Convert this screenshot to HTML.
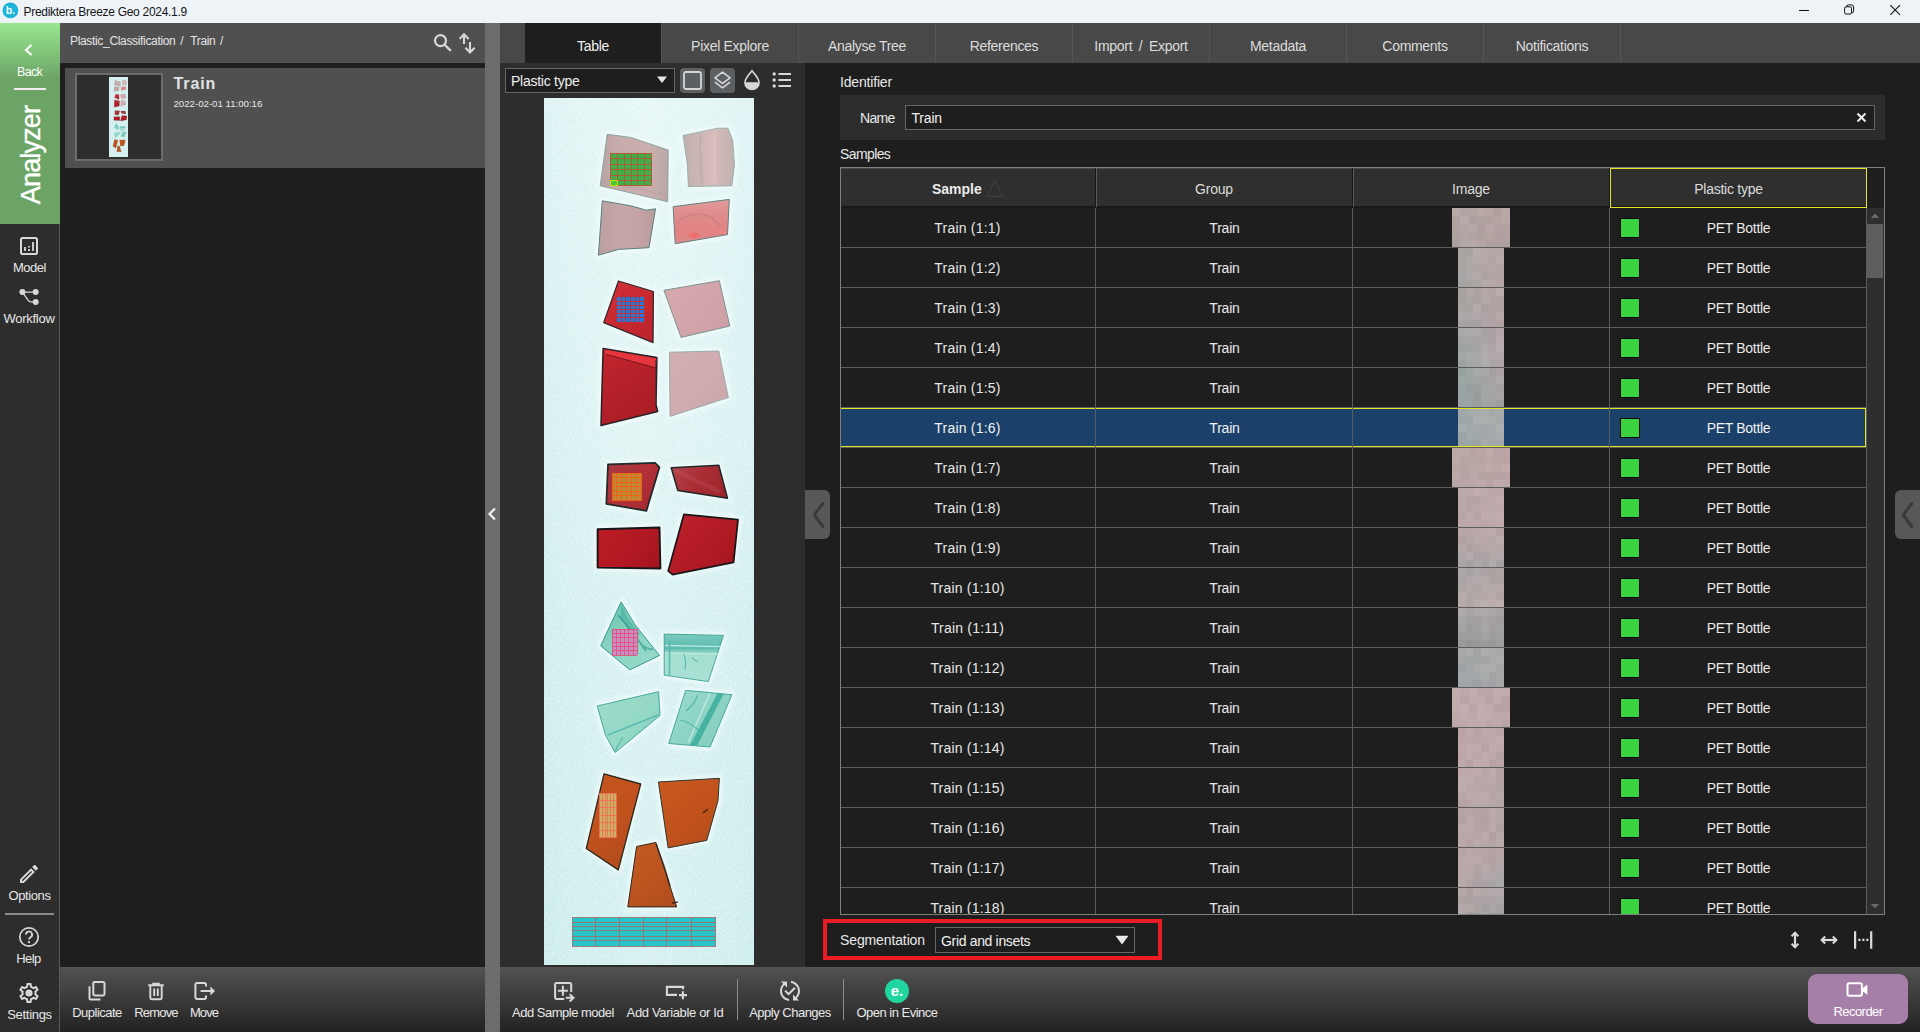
<!DOCTYPE html><html><head><meta charset="utf-8"><title>Prediktera Breeze Geo 2024.1.9</title><style>html,body{margin:0;padding:0;}body{width:1920px;height:1032px;position:relative;overflow:hidden;background:#1e1e1e;font-family:"Liberation Sans",sans-serif;}div{box-sizing:border-box;}</style></head><body>
<div style="position:absolute;left:0px;top:0px;width:1920px;height:23px;background:#eef3f8;"></div>
<svg style="position:absolute;left:1.5px;top:2.4px;" width="17" height="17" viewBox="0 0 17 17"><circle cx="8.4" cy="8.4" r="7.9" fill="#1cb4d8"/><text x="8.3" y="12.3" font-size="10.5" font-weight="bold" fill="#fff" text-anchor="middle" font-family="Liberation Sans, sans-serif">b.</text></svg>
<div style="position:absolute;left:23.5px;top:1px;width:300px;height:23px;line-height:23px;font-size:12px;color:#161616;text-align:left;letter-spacing:-0.29px;font-weight:normal;white-space:nowrap;">Prediktera Breeze Geo 2024.1.9</div>
<svg style="position:absolute;left:1790px;top:0px;" width="130" height="23" viewBox="0 0 130 23"><path d="M9 10.5h10" stroke="#111" stroke-width="1" fill="none"/><rect x="54.600" y="6.800" width="6.900" height="7.200" rx="1.4" fill="none" stroke="#111" stroke-width="1"/><path d="M56.600 6.800v-.3a1.600 1.600 0 0 1 1.600-1.600h3.300a2.100 2.100 0 0 1 2.100 2.100v4.200a1.600 1.600 0 0 1-1.600 1.600h-.5" fill="none" stroke="#111" stroke-width="1"/><path d="M100.300 5.200l9.700 9.700M110 5.200l-9.700 9.700" stroke="#111" stroke-width="1.1" fill="none"/></svg>
<div style="position:absolute;left:0px;top:23px;width:60px;height:1009px;background:#2d2d2d;border-right:1px solid #5a5a5a;box-sizing:border-box;"></div>
<div style="position:absolute;left:0px;top:23px;width:60px;height:201px;background:linear-gradient(#99e68f 0px,#6ca466 56px,#6ca466 201px);"></div>
<svg style="position:absolute;left:19px;top:42px;" width="20" height="16" viewBox="0 0 20 16"><path d="M12.5 3L7 8l5.5 5" fill="none" stroke="#fff" stroke-width="2"/></svg>
<div style="position:absolute;left:0px;top:63px;width:59px;height:18px;line-height:18px;font-size:12.5px;color:#fff;text-align:center;letter-spacing:-0.7px;font-weight:normal;white-space:nowrap;">Back</div>
<div style="position:absolute;left:14px;top:88px;width:32px;height:2px;background:#f4ecf4;"></div>
<div style="position:absolute;left:0;top:100px;width:60px;height:110px;"><div style="position:absolute;left:30.5px;top:54.5px;transform:translate(-50%,-50%) rotate(-90deg);font-size:27px;color:#fff;white-space:nowrap;letter-spacing:-0.85px;-webkit-text-stroke:0.35px #fff;">Analyzer</div></div>
<svg style="position:absolute;left:20px;top:237px;" width="18" height="18" viewBox="0 0 18 18"><rect x="1" y="1" width="16" height="16" rx="1.5" fill="none" stroke="#d8d8d8" stroke-width="2"/><path d="M5 10v4M9 9v1.4M9 12v2M13 5v9" stroke="#d8d8d8" stroke-width="1.8" fill="none"/></svg>
<div style="position:absolute;left:0px;top:259px;width:59px;height:18px;line-height:18px;font-size:13px;color:#e8e8e8;text-align:center;letter-spacing:-0.5px;font-weight:normal;white-space:nowrap;">Model</div>
<svg style="position:absolute;left:18px;top:287px;" width="22" height="20" viewBox="0 0 22 20"><path d="M4.4 5.1h13.3M4.4 5.1l6 8.6q.8 1.2 2.2 1.2h5" stroke="#d8d8d8" stroke-width="1.3" fill="none"/><circle cx="4.4" cy="5.1" r="3" fill="#d8d8d8"/><circle cx="17.7" cy="5.1" r="3" fill="#d8d8d8"/><circle cx="17.7" cy="15" r="3" fill="#d8d8d8"/></svg>
<div style="position:absolute;left:-1px;top:310px;width:60px;height:18px;line-height:18px;font-size:13px;color:#e8e8e8;text-align:center;letter-spacing:-0.25px;font-weight:normal;white-space:nowrap;">Workflow</div>
<svg style="position:absolute;left:17px;top:862px;" width="24" height="24" viewBox="0 0 24 24"><path d="M14.06 9.02l.92.92L5.92 19H5v-.92l9.060-9.060M17.660 3c-.25 0-.51.1-.7.29l-1.830 1.830 3.750 3.750 1.830-1.830c.39-.39.39-1.020 0-1.410l-2.340-2.340c-.2-.2-.45-.29-.71-.29zm-3.600 3.190L3 17.250V21h3.750L17.810 9.940l-3.750-3.750z" fill="#d8d8d8"/></svg>
<div style="position:absolute;left:0px;top:887px;width:59px;height:18px;line-height:18px;font-size:13px;color:#e8e8e8;text-align:center;letter-spacing:-0.4px;font-weight:normal;white-space:nowrap;">Options</div>
<div style="position:absolute;left:5px;top:913px;width:49px;height:2px;background:#8a8a8a;"></div>
<svg style="position:absolute;left:18px;top:926px;" width="22" height="22" viewBox="0 0 22 22"><circle cx="11" cy="11" r="9.2" fill="none" stroke="#d8d8d8" stroke-width="1.7"/><path d="M7.9 8.6a3.1 3.1 0 1 1 4.6 2.7c-1 .6-1.5 1.1-1.5 2.3" fill="none" stroke="#d8d8d8" stroke-width="1.8"/><circle cx="11" cy="16.2" r="1.15" fill="#d8d8d8"/></svg>
<div style="position:absolute;left:-1px;top:950px;width:59px;height:18px;line-height:18px;font-size:13px;color:#e8e8e8;text-align:center;letter-spacing:-0.55px;font-weight:normal;white-space:nowrap;">Help</div>
<svg style="position:absolute;left:16.8px;top:980.8px;" width="24" height="24" viewBox="0 0 24 24"><path d="M19.43 12.98c.04-.32.07-.64.07-.98 0-.34-.03-.66-.07-.98l2.11-1.65c.19-.15.24-.42.12-.64l-2-3.46c-.09-.16-.26-.25-.44-.25-.06 0-.12.01-.17.03l-2.49 1c-.52-.4-1.08-.73-1.69-.98l-.38-2.65C14.46 2.18 14.25 2 14 2h-4c-.25 0-.46.18-.49.42l-.38 2.65c-.61.25-1.17.59-1.69.98l-2.49-1c-.06-.02-.12-.03-.18-.03-.17 0-.34.09-.43.25l-2 3.46c-.13.22-.07.49.12.64l2.11 1.650c-.04.32-.07.65-.07.98 0 .33.03.66.07.98l-2.11 1.650c-.19.15-.24.42-.12.64l2 3.460c.09.16.26.25.44.25.06 0 .12-.01.17-.03l2.490-1c.52.4 1.080.73 1.690.98l.38 2.650c.03.24.24.42.49.42h4c.25 0 .46-.18.49-.42l.38-2.650c.61-.25 1.170-.59 1.690-.98l2.490 1c.06.02.12.03.18.03.17 0 .34-.09.43-.25l2-3.460c.12-.22.07-.49-.12-.64l-2.110-1.650zm-1.980-1.710c.04.31.05.52.05.73 0 .21-.02.43-.05.73l-.14 1.130.89.7 1.080.84-.7 1.210-1.270-.51-1.040-.42-.9.68c-.43.32-.84.56-1.250.73l-1.060.43-.16 1.130-.2 1.350h-1.400l-.19-1.350-.16-1.130-1.060-.43c-.43-.18-.83-.41-1.230-.71l-.91-.7-1.060.43-1.270.51-.7-1.210 1.080-.84.89-.7-.14-1.130c-.03-.31-.05-.54-.05-.74s.02-.43.05-.73l.14-1.130-.89-.7-1.080-.84.7-1.210 1.270.51 1.040.42.9-.68c.43-.32.84-.56 1.250-.73l1.060-.43.16-1.130.2-1.350h1.390l.19 1.350.16 1.130 1.060.43c.43.18.83.41 1.230.71l.91.7 1.060-.43 1.270-.51.7 1.210-1.070.85-.89.7.14 1.130z" fill="#d8d8d8"/><circle cx="12" cy="12" r="3.6" fill="#d8d8d8"/></svg>
<div style="position:absolute;left:0px;top:1006px;width:59px;height:18px;line-height:18px;font-size:13px;color:#e8e8e8;text-align:center;letter-spacing:-0.3px;font-weight:normal;white-space:nowrap;">Settings</div>
<div style="position:absolute;left:60px;top:23px;width:425px;height:40px;background:#505050;"></div>
<div style="position:absolute;left:70px;top:22.5px;width:120px;height:36px;line-height:36px;font-size:12px;color:#e4e4e4;text-align:left;letter-spacing:-0.33px;font-weight:normal;white-space:nowrap;">Plastic_Classification</div>
<div style="position:absolute;left:180.3px;top:22.5px;width:10px;height:36px;line-height:36px;font-size:12px;color:#e4e4e4;text-align:left;letter-spacing:0px;font-weight:normal;white-space:nowrap;">/</div>
<div style="position:absolute;left:190.3px;top:22.5px;width:40px;height:36px;line-height:36px;font-size:12px;color:#e4e4e4;text-align:left;letter-spacing:-0.35px;font-weight:normal;white-space:nowrap;">Train</div>
<div style="position:absolute;left:220px;top:22.5px;width:10px;height:36px;line-height:36px;font-size:12px;color:#e4e4e4;text-align:left;letter-spacing:0px;font-weight:normal;white-space:nowrap;">/</div>
<svg style="position:absolute;left:431px;top:32px;" width="24" height="24" viewBox="0 0 24 24"><circle cx="9.5" cy="8.6" r="5.5" fill="none" stroke="#d8d8d8" stroke-width="2.2"/><path d="M13.500 12.600l6.400 6.200" stroke="#d8d8d8" stroke-width="2.3"/></svg>
<svg style="position:absolute;left:457px;top:32px;" width="24" height="24" viewBox="0 0 24 24"><path d="M7 12.100V2.400M2.600 6.900L7 2.200l4.600 4.700M13 10v10.400M8.500 15.700l4.500 4.800 4.600-4.800" fill="none" stroke="#d8d8d8" stroke-width="2.1"/></svg>
<div style="position:absolute;left:60px;top:63px;width:425px;height:904px;background:#1e1e1e;"></div>
<div style="position:absolute;left:65px;top:68px;width:420px;height:100px;background:#505050;"></div>
<div style="position:absolute;left:75px;top:73px;width:88px;height:88px;background:#2d2d2d;border:2px solid #6c6c6c;box-sizing:border-box;"></div>
<svg style="position:absolute;left:108.8px;top:77px" width="19.4" height="80" viewBox="0 0 210 867"><rect width="210" height="867" fill="#d6f0f0"/><use href="#pcs"/></svg>
<div style="position:absolute;left:173.5px;top:72.5px;width:200px;height:22px;line-height:22px;font-size:16px;color:#e2e2e2;text-align:left;letter-spacing:0.9px;font-weight:bold;white-space:nowrap;">Train</div>
<div style="position:absolute;left:173.5px;top:96.5px;width:200px;height:14px;line-height:14px;font-size:9.7px;color:#e6e6e6;text-align:left;letter-spacing:-0.02px;font-weight:normal;white-space:nowrap;">2022-02-01 11:00:16</div>
<div style="position:absolute;left:60px;top:967px;width:425px;height:65px;background:linear-gradient(#525252,#3b3b3b 48%,#222222);"></div>
<svg style="position:absolute;left:87px;top:981px;" width="20" height="20" viewBox="0 0 20 20"><rect x="6.3" y="1.1" width="11.2" height="13.4" rx="1.4" fill="none" stroke="#d8d8d8" stroke-width="2"/><path d="M2.5 5.2v12a1.2 1.2 0 0 0 1.2 1.2h9.8" fill="none" stroke="#d8d8d8" stroke-width="2"/></svg>
<div style="position:absolute;left:57px;top:1004px;width:80px;height:18px;line-height:18px;font-size:13px;color:#e8e8e8;text-align:center;letter-spacing:-0.5px;font-weight:normal;white-space:nowrap;">Duplicate</div>
<svg style="position:absolute;left:146px;top:981px;" width="20" height="20" viewBox="0 0 20 20"><path d="M2.2 4.2h15.6M7.2 3.6V2.6h5.6v1M4.3 4.8v12a1.4 1.4 0 0 0 1.4 1.4h8.6a1.4 1.4 0 0 0 1.4-1.4V4.8M8.2 7.6v7.4M11.8 7.6v7.4" fill="none" stroke="#d8d8d8" stroke-width="1.9"/></svg>
<div style="position:absolute;left:116px;top:1004px;width:80px;height:18px;line-height:18px;font-size:13px;color:#e8e8e8;text-align:center;letter-spacing:-0.8px;font-weight:normal;white-space:nowrap;">Remove</div>
<svg style="position:absolute;left:193px;top:981px;" width="24" height="20" viewBox="0 0 24 20"><path d="M13 5.6V3.4a1.4 1.4 0 0 0-1.4-1.4H3.8a1.4 1.4 0 0 0-1.4 1.4v13.2a1.4 1.4 0 0 0 1.4 1.4h7.800a1.4 1.4 0 0 0 1.4-1.400v-2.200M7.600 10h11" fill="none" stroke="#d8d8d8" stroke-width="2"/><path d="M17.400 5.600l4.600 4.400-4.600 4.400z" fill="#d8d8d8"/></svg>
<div style="position:absolute;left:164px;top:1004px;width:80px;height:18px;line-height:18px;font-size:13px;color:#e8e8e8;text-align:center;letter-spacing:-0.9px;font-weight:normal;white-space:nowrap;">Move</div>
<div style="position:absolute;left:485px;top:23px;width:15px;height:1009px;background:#6c6c6c;"></div>
<svg style="position:absolute;left:486px;top:506px;" width="13" height="16" viewBox="0 0 13 16"><path d="M9 2.5L3.5 8 9 13.5" fill="none" stroke="#f2f2f2" stroke-width="2.2"/></svg>
<div style="position:absolute;left:500px;top:23px;width:1420px;height:40px;background:#484848;"></div>
<div style="position:absolute;left:525px;top:23px;width:136px;height:40px;background:#1e1e1e;"></div>
<div style="position:absolute;left:525px;top:27px;width:136px;height:38px;line-height:38px;font-size:14px;color:#f0f0f0;text-align:center;letter-spacing:-0.3px;font-weight:normal;white-space:nowrap;">Table</div>
<div style="position:absolute;left:662px;top:27px;width:136px;height:38px;line-height:38px;font-size:14px;color:#dcdcdc;text-align:center;letter-spacing:-0.3px;font-weight:normal;white-space:nowrap;">Pixel Explore</div>
<div style="position:absolute;left:661px;top:23px;width:1px;height:40px;background:#555;"></div>
<div style="position:absolute;left:799px;top:27px;width:136px;height:38px;line-height:38px;font-size:14px;color:#dcdcdc;text-align:center;letter-spacing:-0.3px;font-weight:normal;white-space:nowrap;">Analyse Tree</div>
<div style="position:absolute;left:798px;top:23px;width:1px;height:40px;background:#555;"></div>
<div style="position:absolute;left:936px;top:27px;width:136px;height:38px;line-height:38px;font-size:14px;color:#dcdcdc;text-align:center;letter-spacing:-0.3px;font-weight:normal;white-space:nowrap;">References</div>
<div style="position:absolute;left:935px;top:23px;width:1px;height:40px;background:#555;"></div>
<div style="position:absolute;left:1073px;top:27px;width:136px;height:38px;line-height:38px;font-size:14px;color:#dcdcdc;text-align:center;letter-spacing:-0.3px;font-weight:normal;white-space:nowrap;word-spacing:3px;">Import / Export</div>
<div style="position:absolute;left:1072px;top:23px;width:1px;height:40px;background:#555;"></div>
<div style="position:absolute;left:1210px;top:27px;width:136px;height:38px;line-height:38px;font-size:14px;color:#dcdcdc;text-align:center;letter-spacing:-0.3px;font-weight:normal;white-space:nowrap;">Metadata</div>
<div style="position:absolute;left:1209px;top:23px;width:1px;height:40px;background:#555;"></div>
<div style="position:absolute;left:1347px;top:27px;width:136px;height:38px;line-height:38px;font-size:14px;color:#dcdcdc;text-align:center;letter-spacing:-0.3px;font-weight:normal;white-space:nowrap;">Comments</div>
<div style="position:absolute;left:1346px;top:23px;width:1px;height:40px;background:#555;"></div>
<div style="position:absolute;left:1484px;top:27px;width:136px;height:38px;line-height:38px;font-size:14px;color:#dcdcdc;text-align:center;letter-spacing:-0.3px;font-weight:normal;white-space:nowrap;">Notifications</div>
<div style="position:absolute;left:1483px;top:23px;width:1px;height:40px;background:#555;"></div>
<div style="position:absolute;left:1620px;top:23px;width:1px;height:40px;background:#555;"></div>
<div style="position:absolute;left:500px;top:63px;width:305px;height:904px;background:#2d2d2d;"></div>
<div style="position:absolute;left:505px;top:68px;width:170px;height:25px;background:#1e1e1e;border:1px solid #666;box-sizing:border-box;"></div>
<div style="position:absolute;left:511px;top:69px;width:120px;height:25px;line-height:25px;font-size:14px;color:#f0f0f0;text-align:left;letter-spacing:-0.25px;font-weight:normal;white-space:nowrap;">Plastic type</div>
<svg style="position:absolute;left:657px;top:76px;" width="10" height="8" viewBox="0 0 10 8"><path d="M0 0.5h10L5 7z" fill="#e8e8e8"/></svg>
<div style="position:absolute;left:680px;top:68px;width:25px;height:25px;background:#5d6063;border-radius:4px;"></div>
<svg style="position:absolute;left:683px;top:71px;" width="19" height="19" viewBox="0 0 19 19"><rect x="1" y="1" width="17" height="17" rx="2" fill="none" stroke="#d6d6d6" stroke-width="1.8"/></svg>
<div style="position:absolute;left:710px;top:68px;width:25px;height:25px;background:#5d6063;border-radius:4px;"></div>
<svg style="position:absolute;left:712px;top:70px;" width="21" height="21" viewBox="0 0 21 21"><path d="M10.5 2.2l7.6 5.6-7.6 5.6-7.6-5.6z" fill="none" stroke="#d6d6d6" stroke-width="1.6" stroke-linejoin="round"/><path d="M2.9 12.2l7.6 5.6 7.6-5.6" fill="none" stroke="#d6d6d6" stroke-width="1.6" stroke-linejoin="round"/></svg>
<svg style="position:absolute;left:742px;top:69px;" width="20" height="22" viewBox="0 0 20 22"><path d="M10 1.8C7.4 5.2 3 9.4 3 13.4a7 7 0 0 0 14 0C17 9.4 12.6 5.2 10 1.8z" fill="none" stroke="#d6d6d6" stroke-width="1.7"/><path d="M3 13.2h14q.2 1.200-.2 2.200a7 7 0 0 1-13.600 0q-.4-1-.2-2.200z" fill="#d6d6d6"/></svg>
<svg style="position:absolute;left:772px;top:71px;" width="20" height="18" viewBox="0 0 20 18"><circle cx="2.2" cy="3" r="1.7" fill="#d6d6d6"/><circle cx="2.2" cy="9" r="1.7" fill="#d6d6d6"/><circle cx="2.2" cy="15" r="1.7" fill="#d6d6d6"/><path d="M6.4 3h12.6M6.4 9h12.6M6.4 15h12.6" stroke="#d6d6d6" stroke-width="1.9"/></svg>
<svg style="position:absolute;left:544px;top:98px;" width="210" height="867" viewBox="0 0 210 867"><defs><filter id="nz" x="0" y="0" width="100%" height="100%"><feTurbulence type="fractalNoise" baseFrequency="0.55 0.35" numOctaves="2" seed="3" result="t"/><feColorMatrix in="t" type="matrix" values="0 0 0 0 1  0 0 0 0 1  0 0 0 0 1  1.6 0 0 0 -0.62"/></filter><filter id="nz2" x="0" y="0" width="100%" height="100%"><feTurbulence type="fractalNoise" baseFrequency="0.7 0.25" numOctaves="2" seed="11" result="t"/><feColorMatrix in="t" type="matrix" values="0 0 0 0 0.62  0 0 0 0 0.86  0 0 0 0 0.88  0 1.5 0 0 -0.66"/></filter><filter id="hb" x="-20%" y="-20%" width="140%" height="140%"><feGaussianBlur stdDeviation="2.2"/></filter><filter id="sb" x="-10%" y="-10%" width="120%" height="120%"><feGaussianBlur stdDeviation="1.1"/></filter><linearGradient id="bg" gradientUnits="userSpaceOnUse" x1="0" y1="0" x2="0" y2="867"><stop offset="0" stop-color="#e2f5f5"/><stop offset="0.4" stop-color="#dbf2f2"/><stop offset="0.62" stop-color="#d2efef"/><stop offset="1" stop-color="#cdeded"/></linearGradient><linearGradient id="bgx" gradientUnits="userSpaceOnUse" x1="0" y1="0" x2="210" y2="0"><stop offset="0" stop-color="#b8e2e6"/><stop offset="0.12" stop-color="#d8f0f0"/><stop offset="0.5" stop-color="#ffffff"/><stop offset="0.9" stop-color="#d8f0f0"/><stop offset="1" stop-color="#c4e8ea"/></linearGradient><linearGradient id="p1" gradientUnits="userSpaceOnUse" x1="56" y1="0" x2="124" y2="0"><stop offset="0" stop-color="#b9a3a3"/><stop offset="0.25" stop-color="#c7abab"/><stop offset="0.7" stop-color="#cbb0af"/><stop offset="1" stop-color="#bca7a6"/></linearGradient><linearGradient id="p2" gradientUnits="userSpaceOnUse" x1="139" y1="0" x2="191" y2="0"><stop offset="0" stop-color="#c0b0ae"/><stop offset="0.3" stop-color="#cdb6b5"/><stop offset="0.55" stop-color="#d7bcbc"/><stop offset="0.8" stop-color="#cbb6b4"/><stop offset="1" stop-color="#bfb2af"/></linearGradient><linearGradient id="p3" gradientUnits="userSpaceOnUse" x1="54" y1="0" x2="112" y2="0"><stop offset="0" stop-color="#bb9fa0"/><stop offset="0.4" stop-color="#c7a6a7"/><stop offset="0.7" stop-color="#c4a3a4"/><stop offset="1" stop-color="#b99c9d"/></linearGradient><linearGradient id="p4" gradientUnits="userSpaceOnUse" x1="0" y1="101" x2="0" y2="146"><stop offset="0" stop-color="#e39c9c"/><stop offset="0.35" stop-color="#dd8c8c"/><stop offset="0.7" stop-color="#e58282"/><stop offset="1" stop-color="#d98a8a"/></linearGradient><linearGradient id="p5" gradientUnits="userSpaceOnUse" x1="60" y1="183" x2="110" y2="245"><stop offset="0" stop-color="#d23038"/><stop offset="0.5" stop-color="#c8282f"/><stop offset="1" stop-color="#b8242c"/></linearGradient><linearGradient id="p6" gradientUnits="userSpaceOnUse" x1="120" y1="183" x2="186" y2="240"><stop offset="0" stop-color="#d5a9ad"/><stop offset="0.5" stop-color="#d3a5aa"/><stop offset="1" stop-color="#c99ea4"/></linearGradient><linearGradient id="p7" gradientUnits="userSpaceOnUse" x1="57" y1="250" x2="113" y2="328"><stop offset="0" stop-color="#c4262e"/><stop offset="0.4" stop-color="#b6212a"/><stop offset="1" stop-color="#a81d26"/></linearGradient><linearGradient id="p8" gradientUnits="userSpaceOnUse" x1="125" y1="253" x2="185" y2="318"><stop offset="0" stop-color="#d0b0b3"/><stop offset="0.5" stop-color="#d1abb0"/><stop offset="1" stop-color="#c8a6aa"/></linearGradient><linearGradient id="p9" gradientUnits="userSpaceOnUse" x1="62" y1="365" x2="116" y2="413"><stop offset="0" stop-color="#a83a42"/><stop offset="0.5" stop-color="#b23038"/><stop offset="1" stop-color="#a02830"/></linearGradient><linearGradient id="p10" gradientUnits="userSpaceOnUse" x1="127" y1="367" x2="184" y2="400"><stop offset="0" stop-color="#b4434a"/><stop offset="0.5" stop-color="#a82c34"/><stop offset="1" stop-color="#9c242c"/></linearGradient><linearGradient id="p11" gradientUnits="userSpaceOnUse" x1="53" y1="430" x2="116" y2="470"><stop offset="0" stop-color="#ba1c25"/><stop offset="0.5" stop-color="#b31922"/><stop offset="1" stop-color="#a4151e"/></linearGradient><linearGradient id="p12" gradientUnits="userSpaceOnUse" x1="124" y1="416" x2="194" y2="477"><stop offset="0" stop-color="#bd222b"/><stop offset="0.5" stop-color="#b31b24"/><stop offset="1" stop-color="#a3161f"/></linearGradient><linearGradient id="p13" gradientUnits="userSpaceOnUse" x1="56" y1="504" x2="116" y2="572"><stop offset="0" stop-color="#5fbfae"/><stop offset="0.4" stop-color="#86d0be"/><stop offset="1" stop-color="#9adccc"/></linearGradient><linearGradient id="p14" gradientUnits="userSpaceOnUse" x1="0" y1="536" x2="0" y2="584"><stop offset="0" stop-color="#7ccdbd"/><stop offset="0.12" stop-color="#6cc4b6"/><stop offset="0.3" stop-color="#5fbcb0"/><stop offset="0.42" stop-color="#a4dfd0"/><stop offset="1" stop-color="#a9e0d3"/></linearGradient><linearGradient id="p15" gradientUnits="userSpaceOnUse" x1="53" y1="594" x2="116" y2="655"><stop offset="0" stop-color="#9cdccb"/><stop offset="0.6" stop-color="#93d8c5"/><stop offset="1" stop-color="#6cc4b2"/></linearGradient><linearGradient id="p16" gradientUnits="userSpaceOnUse" x1="125" y1="592" x2="188" y2="649"><stop offset="0" stop-color="#9adccc"/><stop offset="0.5" stop-color="#8dd3c3"/><stop offset="1" stop-color="#84cdbd"/></linearGradient><linearGradient id="p17" gradientUnits="userSpaceOnUse" x1="42" y1="676" x2="97" y2="772"><stop offset="0" stop-color="#c6561f"/><stop offset="0.5" stop-color="#bf511d"/><stop offset="1" stop-color="#b14a1c"/></linearGradient><linearGradient id="p18" gradientUnits="userSpaceOnUse" x1="114" y1="680" x2="176" y2="750"><stop offset="0" stop-color="#c85a20"/><stop offset="0.5" stop-color="#c2521c"/><stop offset="1" stop-color="#b34c1c"/></linearGradient><linearGradient id="p19" gradientUnits="userSpaceOnUse" x1="84" y1="744" x2="133" y2="809"><stop offset="0" stop-color="#c45a22"/><stop offset="0.5" stop-color="#bd5520"/><stop offset="1" stop-color="#b04c1e"/></linearGradient></defs><rect width="210" height="867" fill="url(#bg)"/><rect width="210" height="867" fill="url(#bgx)" opacity="0.16"/><rect width="210" height="867" filter="url(#nz)" opacity="0.55"/><rect width="210" height="867" filter="url(#nz2)" opacity="0.35"/><g filter="url(#hb)" opacity="0.9"><polygon points="63.2,36.3 86.7,39.4 124.2,52.0 123.7,103.8 93.7,96.5 56.2,87.8" fill="#f4fcfc" stroke="#f4fcfc" stroke-width="6" stroke-linejoin="round" /><polygon points="139.0,37.5 173.9,30.2 184.0,30.2 188.8,42.4 190.5,66.8 187.9,87.8 144.3,88.6 143.4,66.8" fill="#f4fcfc" stroke="#f4fcfc" stroke-width="6" stroke-linejoin="round" /><polygon points="58.3,102.8 86.7,107.8 102.4,112.2 111.5,110.8 105.0,149.7 74.5,151.4 54.4,157.2" fill="#f4fcfc" stroke="#f4fcfc" stroke-width="6" stroke-linejoin="round" /><polygon points="129.1,108.7 185.3,101.4 183.5,136.6 131.2,145.7" fill="#f4fcfc" stroke="#f4fcfc" stroke-width="6" stroke-linejoin="round" /><polygon points="74.5,183.0 109.4,193.5 109.0,244.6 59.7,224.6" fill="#f4fcfc" stroke="#f4fcfc" stroke-width="6" stroke-linejoin="round" /><polygon points="119.9,192.3 175.3,182.7 185.8,228.1 137.0,239.4" fill="#f4fcfc" stroke="#f4fcfc" stroke-width="6" stroke-linejoin="round" /><polygon points="59.1,250.4 112.9,259.5 112.0,306.6 113.7,313.5 57.0,327.5" fill="#f4fcfc" stroke="#f4fcfc" stroke-width="6" stroke-linejoin="round" /><polygon points="125.4,254.2 174.8,253.0 184.4,299.6 126.0,318.4" fill="#f4fcfc" stroke="#f4fcfc" stroke-width="6" stroke-linejoin="round" /><polygon points="64.0,366.3 111.1,364.9 115.5,369.3 102.4,412.9 62.3,405.9" fill="#f4fcfc" stroke="#f4fcfc" stroke-width="6" stroke-linejoin="round" /><polygon points="127.2,369.8 174.8,367.2 183.5,400.2 133.8,392.5" fill="#f4fcfc" stroke="#f4fcfc" stroke-width="6" stroke-linejoin="round" /><polygon points="53.6,431.2 115.5,429.5 116.4,470.5 53.6,469.6" fill="#f4fcfc" stroke="#f4fcfc" stroke-width="6" stroke-linejoin="round" /><polygon points="139.9,416.4 194.0,421.6 189.6,464.4 128.6,476.6 124.2,473.1" fill="#f4fcfc" stroke="#f4fcfc" stroke-width="6" stroke-linejoin="round" /><polygon points="77.1,503.9 91.1,526.9 115.5,557.4 85.8,571.9 56.7,547.8" fill="#f4fcfc" stroke="#f4fcfc" stroke-width="6" stroke-linejoin="round" /><polygon points="120.2,536.0 179.5,537.4 164.3,583.6 120.2,577.1" fill="#f4fcfc" stroke="#f4fcfc" stroke-width="6" stroke-linejoin="round" /><polygon points="53.2,608.0 114.6,593.7 116.0,617.6 71.0,654.6 61.4,636.8" fill="#f4fcfc" stroke="#f4fcfc" stroke-width="6" stroke-linejoin="round" /><polygon points="141.7,592.3 187.9,596.7 166.1,649.0 124.7,645.5" fill="#f4fcfc" stroke="#f4fcfc" stroke-width="6" stroke-linejoin="round" /><polygon points="60.0,675.8 96.7,686.0 74.3,771.9 42.3,750.5" fill="#f4fcfc" stroke="#f4fcfc" stroke-width="6" stroke-linejoin="round" /><polygon points="114.4,684.0 175.4,680.3 174.0,702.7 162.8,742.4 124.1,749.9" fill="#f4fcfc" stroke="#f4fcfc" stroke-width="6" stroke-linejoin="round" /><polygon points="92.6,748.5 111.9,744.4 132.7,808.9 83.8,808.9" fill="#f4fcfc" stroke="#f4fcfc" stroke-width="6" stroke-linejoin="round" /></g><g id="pcs"><polygon points="63.2,36.3 86.7,39.4 124.2,52.0 123.7,103.8 93.7,96.5 56.2,87.8" fill="url(#p1)" stroke="#7d9f9b" stroke-width="0.9" stroke-linejoin="round" /><polygon points="139.0,37.5 173.9,30.2 184.0,30.2 188.8,42.4 190.5,66.8 187.9,87.8 144.3,88.6 143.4,66.8" fill="url(#p2)" stroke="#86a8a4" stroke-width="0.8" stroke-linejoin="round" /><polygon points="58.3,102.8 86.7,107.8 102.4,112.2 111.5,110.8 105.0,149.7 74.5,151.4 54.4,157.2" fill="url(#p3)" stroke="#56827e" stroke-width="1.0" stroke-linejoin="round" /><polygon points="129.1,108.7 185.3,101.4 183.5,136.6 131.2,145.7" fill="url(#p4)" stroke="#5f807c" stroke-width="1.0" stroke-linejoin="round" /><polygon points="74.5,183.0 109.4,193.5 109.0,244.6 59.7,224.6" fill="url(#p5)" stroke="#33292d" stroke-width="1.3" stroke-linejoin="round" /><polygon points="119.9,192.3 175.3,182.7 185.8,228.1 137.0,239.4" fill="url(#p6)" stroke="#6f8f8a" stroke-width="0.9" stroke-linejoin="round" /><polygon points="59.1,250.4 112.9,259.5 112.0,306.6 113.7,313.5 57.0,327.5" fill="url(#p7)" stroke="#272225" stroke-width="1.5" stroke-linejoin="round" /><polygon points="125.4,254.2 174.8,253.0 184.4,299.6 126.0,318.4" fill="url(#p8)" stroke="#86a5a0" stroke-width="0.8" stroke-linejoin="round" /><polygon points="64.0,366.3 111.1,364.9 115.5,369.3 102.4,412.9 62.3,405.9" fill="url(#p9)" stroke="#1d2a2a" stroke-width="1.7" stroke-linejoin="round" /><polygon points="127.2,369.8 174.8,367.2 183.5,400.2 133.8,392.5" fill="url(#p10)" stroke="#1d2a2a" stroke-width="1.5" stroke-linejoin="round" /><polygon points="53.6,431.2 115.5,429.5 116.4,470.5 53.6,469.6" fill="url(#p11)" stroke="#17171a" stroke-width="1.9" stroke-linejoin="round" /><polygon points="139.9,416.4 194.0,421.6 189.6,464.4 128.6,476.6 124.2,473.1" fill="url(#p12)" stroke="#17171a" stroke-width="1.7" stroke-linejoin="round" /><polygon points="77.1,503.9 91.1,526.9 115.5,557.4 85.8,571.9 56.7,547.8" fill="url(#p13)" stroke="#2f9a8c" stroke-width="1.0" stroke-linejoin="round" /><polygon points="120.2,536.0 179.5,537.4 164.3,583.6 120.2,577.1" fill="url(#p14)" stroke="#37a092" stroke-width="0.9" stroke-linejoin="round" /><polygon points="53.2,608.0 114.6,593.7 116.0,617.6 71.0,654.6 61.4,636.8" fill="url(#p15)" stroke="#37a092" stroke-width="0.9" stroke-linejoin="round" /><polygon points="141.7,592.3 187.9,596.7 166.1,649.0 124.7,645.5" fill="url(#p16)" stroke="#37a092" stroke-width="0.9" stroke-linejoin="round" /><polygon points="60.0,675.8 96.7,686.0 74.3,771.9 42.3,750.5" fill="url(#p17)" stroke="#29281f" stroke-width="1.3" stroke-linejoin="round" /><polygon points="114.4,684.0 175.4,680.3 174.0,702.7 162.8,742.4 124.1,749.9" fill="url(#p18)" stroke="#2a3a32" stroke-width="1.0" stroke-linejoin="round" /><polygon points="92.6,748.5 111.9,744.4 132.7,808.9 83.8,808.9" fill="url(#p19)" stroke="#29281f" stroke-width="1.0" stroke-linejoin="round" /><polygon points="61.5,251.8 112.3,260.6 111.9,269.8 98.0,266.0 61.0,256.2" fill="#e4363c" /><path d="M62 256.4L98 266.2l13.8 3.8" stroke="#7a1218" stroke-width="1" fill="none"/><path d="M111.6 262v44" stroke="#5a2a2e" stroke-width="1.2" fill="none" opacity=".7"/><path d="M134 124c10-9 24-10 34-4 4 3 7 6 9 10" stroke="#c97b7b" stroke-width="1.6" fill="none" stroke-dasharray="1.6 1.2"/><ellipse cx="150" cy="137.5" rx="5.5" ry="2.4" fill="#f0645f" opacity=".8" filter="url(#sb)"/><path d="M156 36c-1 18 0 36 3 52" stroke="#b39f9e" stroke-width="2.4" fill="none" opacity=".55" filter="url(#sb)"/><path d="M171 33c-2 18-1 36 1 54" stroke="#e2c8c8" stroke-width="3" fill="none" opacity=".6" filter="url(#sb)"/><path d="M58 82l64 15" stroke="#b39a9a" stroke-width="2.2" fill="none" opacity=".55" filter="url(#sb)"/><path d="M130 372l46 22" stroke="#c0545a" stroke-width="3" fill="none" opacity=".5" filter="url(#sb)"/><polygon points="77.5,507.0 84.0,520.0 96.0,536.0 90.0,540.0 76.0,519.0" fill="#4fb3a4" opacity=".75"/><path d="M74 517l18 22 10 14" stroke="#2f9a8c" stroke-width="1.3" fill="none" opacity=".8"/><path d="M99 548q6 4 10 3" stroke="#3aa596" stroke-width="2" fill="none" opacity=".7"/><path d="M121 547.5l56 1.2M121 554.8l53 1.4" stroke="#c2ece2" stroke-width="1.3" fill="none" opacity=".9"/><path d="M125.5 545v32" stroke="#49b3a6" stroke-width="1.6" fill="none" opacity=".8"/><path d="M140 556q3 8 1 16M148 560l6 4" stroke="#3fae9f" stroke-width="1" fill="none" opacity=".8"/><polygon points="173.5,595.6 179.5,596.2 153.0,647.8 146.0,647.2" fill="#3fae9f" opacity=".9"/><path d="M166 595l-22 50" stroke="#c4eee4" stroke-width="1.6" fill="none" opacity=".8"/><path d="M154 597q-4 10-12 16M136 622q10 2 18 10" stroke="#3fae9f" stroke-width="1.2" fill="none" opacity=".8"/><path d="M64 637l50-20M71 653l8-14" stroke="#49b3a6" stroke-width="1.4" fill="none" opacity=".75"/><path d="M159 715l5-4M128 805l6-1" stroke="#2a1a10" stroke-width="1.4" fill="none" opacity=".8"/><path d="M112 746l8 22 6 20" stroke="#30281c" stroke-width="1.6" fill="none" opacity=".8"/></g><rect x="66.3" y="55.3" width="41.5" height="32.6" fill="#43ad4c"/><path d="M66.30 55.3V87.9M73.22 55.3V87.9M80.13 55.3V87.9M87.05 55.3V87.9M93.97 55.3V87.9M100.88 55.3V87.9M107.80 55.3V87.9M66.3 55.30H107.8M66.3 60.73H107.8M66.3 66.17H107.8M66.3 71.60H107.8M66.3 77.03H107.8M66.3 82.47H107.8M66.3 87.90H107.8" stroke="#b9522a" stroke-width="0.85" fill="none" shape-rendering="crispEdges"/><rect x="66.6" y="82.6" width="6.7" height="5.1" fill="#3ccb3c" stroke="#e8e800" stroke-width="0.85"/><rect x="72.7" y="198.9" width="27.6" height="25.3" fill="#2b76d2"/><path d="M72.70 198.9V224.2M77.30 198.9V224.2M81.90 198.9V224.2M86.50 198.9V224.2M91.10 198.9V224.2M95.70 198.9V224.2M100.30 198.9V224.2M72.7 198.90H100.3M72.7 203.12H100.3M72.7 207.33H100.3M72.7 211.55H100.3M72.7 215.77H100.3M72.7 219.98H100.3M72.7 224.20H100.3" stroke="#c42c34" stroke-width="0.95" fill="none" shape-rendering="crispEdges"/><rect x="68" y="375" width="29.5" height="27.0" fill="#bd8a3a"/><path d="M68.00 375V402M72.92 375V402M77.83 375V402M82.75 375V402M87.67 375V402M92.58 375V402M97.50 375V402M68 375.00H97.5M68 379.50H97.5M68 384.00H97.5M68 388.50H97.5M68 393.00H97.5M68 397.50H97.5M68 402.00H97.5" stroke="#f0620f" stroke-width="0.95" fill="none" shape-rendering="crispEdges"/><rect x="68" y="531.3" width="25.2" height="25.8" fill="#c58fcb"/><path d="M68.00 531.3V557.1M72.20 531.3V557.1M76.40 531.3V557.1M80.60 531.3V557.1M84.80 531.3V557.1M89.00 531.3V557.1M93.20 531.3V557.1M68 531.30H93.2M68 535.60H93.2M68 539.90H93.2M68 544.20H93.2M68 548.50H93.2M68 552.80H93.2M68 557.10H93.2" stroke="#e8486a" stroke-width="0.8" fill="none" shape-rendering="crispEdges"/><rect x="55.4" y="695" width="16.8" height="44.7" fill="#c9b062"/><path d="M55.40 695V739.7M58.20 695V739.7M61.00 695V739.7M63.80 695V739.7M66.60 695V739.7M69.40 695V739.7M72.20 695V739.7M55.4 695.00H72.2M55.4 702.45H72.2M55.4 709.90H72.2M55.4 717.35H72.2M55.4 724.80H72.2M55.4 732.25H72.2M55.4 739.70H72.2" stroke="#f06e56" stroke-width="0.85" fill="none" shape-rendering="crispEdges"/><rect x="28.3" y="819.2" width="143.4" height="29.3" fill="#27c4c8"/><path d="M28.3 819.2V848.5M51.6 819.2V848.5M75.3 819.2V848.5M99.5 819.2V848.5M122.6 819.2V848.5M147.6 819.2V848.5M171.7 819.2V848.5M28.3 819.2H171.7M28.3 824.2H171.7M28.3 828.2H171.7M28.3 832.4H171.7M28.3 838.4H171.7M28.3 842.2H171.7M28.3 848.5H171.7" stroke="#b06264" stroke-width="0.75" fill="none" shape-rendering="crispEdges"/></svg>
<div style="position:absolute;left:805px;top:490px;width:25px;height:49px;background:#585858;border-radius:0 6px 6px 0;"></div>
<svg style="position:absolute;left:808px;top:498px;" width="20" height="34" viewBox="0 0 20 34"><path d="M14.800 5.500L6.300 17l8.500 11.500" fill="none" stroke="#3a3a3a" stroke-width="3" stroke-linecap="round" stroke-linejoin="round"/></svg>
<div style="position:absolute;left:1895px;top:490px;width:25px;height:49px;background:#585858;border-radius:6px 0 0 6px;"></div>
<svg style="position:absolute;left:1897px;top:498px;" width="20" height="34" viewBox="0 0 20 34"><path d="M14.800 5.500L6.300 17l8.500 11.500" fill="none" stroke="#3a3a3a" stroke-width="3" stroke-linecap="round" stroke-linejoin="round"/></svg>
<div style="position:absolute;left:840px;top:72px;width:100px;height:20px;line-height:20px;font-size:14px;color:#e8e8e8;text-align:left;letter-spacing:-0.18px;font-weight:normal;white-space:nowrap;">Identifier</div>
<div style="position:absolute;left:840px;top:95px;width:1045px;height:45px;background:#2d2d2d;"></div>
<div style="position:absolute;left:860px;top:106px;width:40px;height:25px;line-height:25px;font-size:14px;color:#e8e8e8;text-align:left;letter-spacing:-0.7px;font-weight:normal;white-space:nowrap;">Name</div>
<div style="position:absolute;left:905px;top:105px;width:970px;height:25px;background:#1e1e1e;border:1px solid #666;box-sizing:border-box;"></div>
<div style="position:absolute;left:911.5px;top:106px;width:60px;height:25px;line-height:25px;font-size:14px;color:#f0f0f0;text-align:left;letter-spacing:-0.2px;font-weight:normal;white-space:nowrap;">Train</div>
<svg style="position:absolute;left:1856px;top:112px;" width="11" height="11" viewBox="0 0 11 11"><path d="M1.5 1.5l8 8M9.5 1.5l-8 8" stroke="#f0f0f0" stroke-width="2"/></svg>
<div style="position:absolute;left:840px;top:144px;width:100px;height:20px;line-height:20px;font-size:14px;color:#e8e8e8;text-align:left;letter-spacing:-0.6px;font-weight:normal;white-space:nowrap;">Samples</div>
<div style="position:absolute;left:840px;top:167px;width:1045px;height:748px;background:transparent;border:1px solid #808080;box-sizing:border-box;"></div>
<div style="position:absolute;left:841px;top:168px;width:1043px;height:40px;background:#2f2f2f;"></div>
<div style="position:absolute;left:841px;top:168px;width:1043px;height:1px;background:#4a4a4a;"></div>
<div style="position:absolute;left:841px;top:206px;width:1043px;height:2px;background:#191919;"></div>
<div style="position:absolute;left:1095px;top:168px;width:1px;height:39px;background:#161616;"></div>
<div style="position:absolute;left:1096px;top:168px;width:1px;height:39px;background:#5a5a5a;"></div>
<div style="position:absolute;left:1352px;top:168px;width:1px;height:39px;background:#161616;"></div>
<div style="position:absolute;left:1353px;top:168px;width:1px;height:39px;background:#5a5a5a;"></div>
<div style="position:absolute;left:1609px;top:168px;width:1px;height:39px;background:#161616;"></div>
<div style="position:absolute;left:1610px;top:168px;width:1px;height:39px;background:#5a5a5a;"></div>
<div style="position:absolute;left:932px;top:170px;width:52px;height:38px;line-height:38px;font-size:14px;color:#ececec;text-align:left;letter-spacing:0px;font-weight:bold;white-space:nowrap;">Sample</div>
<svg style="position:absolute;left:985px;top:179px;" width="20" height="20" viewBox="0 0 20 20"><path d="M10 1.5L18 17.5H2z" fill="none" stroke="#414141" stroke-width="1"/></svg>
<div style="position:absolute;left:1096px;top:170px;width:236px;height:38px;line-height:38px;font-size:14px;color:#dcdcdc;text-align:center;letter-spacing:-0.2px;font-weight:normal;white-space:nowrap;">Group</div>
<div style="position:absolute;left:1353px;top:170px;width:236px;height:38px;line-height:38px;font-size:14px;color:#dcdcdc;text-align:center;letter-spacing:-0.2px;font-weight:normal;white-space:nowrap;">Image</div>
<div style="position:absolute;left:1610px;top:168px;width:257px;height:40px;background:transparent;border:1px solid #e6e61e;box-sizing:border-box;"></div>
<div style="position:absolute;left:1610px;top:170px;width:237px;height:38px;line-height:38px;font-size:14px;color:#dcdcdc;text-align:center;letter-spacing:-0.25px;font-weight:normal;white-space:nowrap;">Plastic type</div>
<div style="position:absolute;left:840px;top:208px;width:1044px;height:706px;overflow:hidden;"><svg style="position:absolute;left:0;top:0px" width="1046" height="40" shape-rendering="crispEdges"><rect x="612.0" y="0.0" width="8.9" height="8.6" fill="#b6a9a7"/><rect x="620.3" y="0.0" width="8.9" height="8.6" fill="#b1a4a2"/><rect x="628.6" y="0.0" width="8.9" height="8.6" fill="#b3a5a3"/><rect x="636.9" y="0.0" width="8.9" height="8.6" fill="#b9aaa8"/><rect x="645.1" y="0.0" width="8.9" height="8.6" fill="#b7a8a6"/><rect x="653.4" y="0.0" width="8.9" height="8.6" fill="#b0a09e"/><rect x="661.7" y="0.0" width="8.3" height="8.6" fill="#b8a8a6"/><rect x="612.0" y="8.0" width="8.9" height="8.6" fill="#afa2a0"/><rect x="620.3" y="8.0" width="8.9" height="8.6" fill="#b7a9a7"/><rect x="628.6" y="8.0" width="8.9" height="8.6" fill="#ada09e"/><rect x="636.9" y="8.0" width="8.9" height="8.6" fill="#b0a2a0"/><rect x="645.1" y="8.0" width="8.9" height="8.6" fill="#b0a19f"/><rect x="653.4" y="8.0" width="8.9" height="8.6" fill="#b4a5a3"/><rect x="661.7" y="8.0" width="8.3" height="8.6" fill="#b7a7a5"/><rect x="612.0" y="16.0" width="8.9" height="8.6" fill="#afa2a0"/><rect x="620.3" y="16.0" width="8.9" height="8.6" fill="#b2a5a3"/><rect x="628.6" y="16.0" width="8.9" height="8.6" fill="#b5a7a5"/><rect x="636.9" y="16.0" width="8.9" height="8.6" fill="#afa09f"/><rect x="645.1" y="16.0" width="8.9" height="8.6" fill="#b7a8a7"/><rect x="653.4" y="16.0" width="8.9" height="8.6" fill="#b2a2a1"/><rect x="661.7" y="16.0" width="8.3" height="8.6" fill="#b0a09e"/><rect x="612.0" y="24.0" width="8.9" height="8.6" fill="#aea2a0"/><rect x="620.3" y="24.0" width="8.9" height="8.6" fill="#b2a5a3"/><rect x="628.6" y="24.0" width="8.9" height="8.6" fill="#b0a3a1"/><rect x="636.9" y="24.0" width="8.9" height="8.6" fill="#afa19f"/><rect x="645.1" y="24.0" width="8.9" height="8.6" fill="#b4a5a3"/><rect x="653.4" y="24.0" width="8.9" height="8.6" fill="#b0a1a0"/><rect x="661.7" y="24.0" width="8.3" height="8.6" fill="#b0a09f"/><rect x="612.0" y="32.0" width="8.9" height="8.6" fill="#ada19f"/><rect x="620.3" y="32.0" width="8.9" height="8.6" fill="#b4a8a6"/><rect x="628.6" y="32.0" width="8.9" height="8.6" fill="#b5a8a6"/><rect x="636.9" y="32.0" width="8.9" height="8.6" fill="#b4a6a4"/><rect x="645.1" y="32.0" width="8.9" height="8.6" fill="#afa19f"/><rect x="653.4" y="32.0" width="8.9" height="8.6" fill="#b0a19f"/><rect x="661.7" y="32.0" width="8.3" height="8.6" fill="#af9f9e"/></svg><div style="position:absolute;left:1px;top:39px;width:1025px;height:1px;background:#5c5c5c;"></div><div style="position:absolute;left:0px;top:1px;width:255px;height:39px;line-height:39px;font-size:14px;color:#e8e8e8;text-align:center;letter-spacing:0.2px;font-weight:normal;white-space:nowrap;">Train (1:1)</div><div style="position:absolute;left:256px;top:1px;width:257px;height:39px;line-height:39px;font-size:14px;color:#e8e8e8;text-align:center;letter-spacing:-0.2px;font-weight:normal;white-space:nowrap;">Train</div><div style="position:absolute;left:780px;top:10px;width:20px;height:20px;background:#3bd23f;border:1px solid #0a0a0a;box-sizing:border-box;"></div><div style="position:absolute;left:770px;top:1px;width:257px;height:39px;line-height:39px;font-size:14px;color:#e8e8e8;text-align:center;letter-spacing:-0.3px;font-weight:normal;white-space:nowrap;">PET Bottle</div><svg style="position:absolute;left:0;top:40px" width="1046" height="40" shape-rendering="crispEdges"><rect x="618.0" y="0.0" width="8.3" height="8.6" fill="#a7a4a2"/><rect x="625.7" y="0.0" width="8.3" height="8.6" fill="#a9a3a1"/><rect x="633.3" y="0.0" width="8.3" height="8.6" fill="#b5acab"/><rect x="641.0" y="0.0" width="8.3" height="8.6" fill="#b5a9a8"/><rect x="648.7" y="0.0" width="8.3" height="8.6" fill="#b6a7a7"/><rect x="656.3" y="0.0" width="7.7" height="8.6" fill="#b7a6a6"/><rect x="618.0" y="8.0" width="8.3" height="8.6" fill="#a7a4a2"/><rect x="625.7" y="8.0" width="8.3" height="8.6" fill="#aea8a7"/><rect x="633.3" y="8.0" width="8.3" height="8.6" fill="#b4acab"/><rect x="641.0" y="8.0" width="8.3" height="8.6" fill="#b4a9a8"/><rect x="648.7" y="8.0" width="8.3" height="8.6" fill="#b2a4a4"/><rect x="656.3" y="8.0" width="7.7" height="8.6" fill="#baa9aa"/><rect x="618.0" y="16.0" width="8.3" height="8.6" fill="#a8a5a3"/><rect x="625.7" y="16.0" width="8.3" height="8.6" fill="#aea8a7"/><rect x="633.3" y="16.0" width="8.3" height="8.6" fill="#aea5a4"/><rect x="641.0" y="16.0" width="8.3" height="8.6" fill="#b0a5a4"/><rect x="648.7" y="16.0" width="8.3" height="8.6" fill="#b4a6a6"/><rect x="656.3" y="16.0" width="7.7" height="8.6" fill="#b4a3a4"/><rect x="618.0" y="24.0" width="8.3" height="8.6" fill="#a8a6a4"/><rect x="625.7" y="24.0" width="8.3" height="8.6" fill="#aea9a8"/><rect x="633.3" y="24.0" width="8.3" height="8.6" fill="#b3abaa"/><rect x="641.0" y="24.0" width="8.3" height="8.6" fill="#aea3a3"/><rect x="648.7" y="24.0" width="8.3" height="8.6" fill="#b2a5a5"/><rect x="656.3" y="24.0" width="7.7" height="8.6" fill="#b4a4a5"/><rect x="618.0" y="32.0" width="8.3" height="8.6" fill="#a6a4a2"/><rect x="625.7" y="32.0" width="8.3" height="8.6" fill="#a9a4a2"/><rect x="633.3" y="32.0" width="8.3" height="8.6" fill="#aea6a5"/><rect x="641.0" y="32.0" width="8.3" height="8.6" fill="#b5aaaa"/><rect x="648.7" y="32.0" width="8.3" height="8.6" fill="#b7a9aa"/><rect x="656.3" y="32.0" width="7.7" height="8.6" fill="#b5a5a6"/></svg><div style="position:absolute;left:1px;top:79px;width:1025px;height:1px;background:#5c5c5c;"></div><div style="position:absolute;left:0px;top:41px;width:255px;height:39px;line-height:39px;font-size:14px;color:#e8e8e8;text-align:center;letter-spacing:0.2px;font-weight:normal;white-space:nowrap;">Train (1:2)</div><div style="position:absolute;left:256px;top:41px;width:257px;height:39px;line-height:39px;font-size:14px;color:#e8e8e8;text-align:center;letter-spacing:-0.2px;font-weight:normal;white-space:nowrap;">Train</div><div style="position:absolute;left:780px;top:50px;width:20px;height:20px;background:#3bd23f;border:1px solid #0a0a0a;box-sizing:border-box;"></div><div style="position:absolute;left:770px;top:41px;width:257px;height:39px;line-height:39px;font-size:14px;color:#e8e8e8;text-align:center;letter-spacing:-0.3px;font-weight:normal;white-space:nowrap;">PET Bottle</div><svg style="position:absolute;left:0;top:80px" width="1046" height="40" shape-rendering="crispEdges"><rect x="618.0" y="0.0" width="8.3" height="8.6" fill="#a7a3a1"/><rect x="625.7" y="0.0" width="8.3" height="8.6" fill="#b0a9a8"/><rect x="633.3" y="0.0" width="8.3" height="8.6" fill="#aca3a2"/><rect x="641.0" y="0.0" width="8.3" height="8.6" fill="#b3a7a7"/><rect x="648.7" y="0.0" width="8.3" height="8.6" fill="#b1a3a3"/><rect x="656.3" y="0.0" width="7.7" height="8.6" fill="#bcabac"/><rect x="618.0" y="8.0" width="8.3" height="8.6" fill="#a6a2a0"/><rect x="625.7" y="8.0" width="8.3" height="8.6" fill="#aaa4a2"/><rect x="633.3" y="8.0" width="8.3" height="8.6" fill="#aba2a2"/><rect x="641.0" y="8.0" width="8.3" height="8.6" fill="#b4a9a9"/><rect x="648.7" y="8.0" width="8.3" height="8.6" fill="#b1a3a4"/><rect x="656.3" y="8.0" width="7.7" height="8.6" fill="#b3a2a3"/><rect x="618.0" y="16.0" width="8.3" height="8.6" fill="#a7a4a2"/><rect x="625.7" y="16.0" width="8.3" height="8.6" fill="#a7a1a0"/><rect x="633.3" y="16.0" width="8.3" height="8.6" fill="#b3abaa"/><rect x="641.0" y="16.0" width="8.3" height="8.6" fill="#aba0a0"/><rect x="648.7" y="16.0" width="8.3" height="8.6" fill="#afa2a2"/><rect x="656.3" y="16.0" width="7.7" height="8.6" fill="#b3a2a4"/><rect x="618.0" y="24.0" width="8.3" height="8.6" fill="#aca9a8"/><rect x="625.7" y="24.0" width="8.3" height="8.6" fill="#ada7a7"/><rect x="633.3" y="24.0" width="8.3" height="8.6" fill="#b0a8a8"/><rect x="641.0" y="24.0" width="8.3" height="8.6" fill="#b0a5a6"/><rect x="648.7" y="24.0" width="8.3" height="8.6" fill="#afa2a3"/><rect x="656.3" y="24.0" width="7.7" height="8.6" fill="#b8a7a9"/><rect x="618.0" y="32.0" width="8.3" height="8.6" fill="#a5a2a1"/><rect x="625.7" y="32.0" width="8.3" height="8.6" fill="#a7a1a1"/><rect x="633.3" y="32.0" width="8.3" height="8.6" fill="#a89fa0"/><rect x="641.0" y="32.0" width="8.3" height="8.6" fill="#b0a5a6"/><rect x="648.7" y="32.0" width="8.3" height="8.6" fill="#b1a3a5"/><rect x="656.3" y="32.0" width="7.7" height="8.6" fill="#b1a1a3"/></svg><div style="position:absolute;left:1px;top:119px;width:1025px;height:1px;background:#5c5c5c;"></div><div style="position:absolute;left:0px;top:81px;width:255px;height:39px;line-height:39px;font-size:14px;color:#e8e8e8;text-align:center;letter-spacing:0.2px;font-weight:normal;white-space:nowrap;">Train (1:3)</div><div style="position:absolute;left:256px;top:81px;width:257px;height:39px;line-height:39px;font-size:14px;color:#e8e8e8;text-align:center;letter-spacing:-0.2px;font-weight:normal;white-space:nowrap;">Train</div><div style="position:absolute;left:780px;top:90px;width:20px;height:20px;background:#3bd23f;border:1px solid #0a0a0a;box-sizing:border-box;"></div><div style="position:absolute;left:770px;top:81px;width:257px;height:39px;line-height:39px;font-size:14px;color:#e8e8e8;text-align:center;letter-spacing:-0.3px;font-weight:normal;white-space:nowrap;">PET Bottle</div><svg style="position:absolute;left:0;top:120px" width="1046" height="40" shape-rendering="crispEdges"><rect x="618.0" y="0.0" width="8.3" height="8.6" fill="#a7a9a7"/><rect x="625.7" y="0.0" width="8.3" height="8.6" fill="#abaaa9"/><rect x="633.3" y="0.0" width="8.3" height="8.6" fill="#ada9a9"/><rect x="641.0" y="0.0" width="8.3" height="8.6" fill="#a9a2a2"/><rect x="648.7" y="0.0" width="8.3" height="8.6" fill="#aca2a3"/><rect x="656.3" y="0.0" width="7.7" height="8.6" fill="#b3a6a8"/><rect x="618.0" y="8.0" width="8.3" height="8.6" fill="#a2a5a4"/><rect x="625.7" y="8.0" width="8.3" height="8.6" fill="#a6a6a5"/><rect x="633.3" y="8.0" width="8.3" height="8.6" fill="#a5a2a1"/><rect x="641.0" y="8.0" width="8.3" height="8.6" fill="#aaa4a5"/><rect x="648.7" y="8.0" width="8.3" height="8.6" fill="#aba2a3"/><rect x="656.3" y="8.0" width="7.7" height="8.6" fill="#b6aaac"/><rect x="618.0" y="16.0" width="8.3" height="8.6" fill="#9ea2a1"/><rect x="625.7" y="16.0" width="8.3" height="8.6" fill="#a2a3a3"/><rect x="633.3" y="16.0" width="8.3" height="8.6" fill="#a6a4a4"/><rect x="641.0" y="16.0" width="8.3" height="8.6" fill="#afaaab"/><rect x="648.7" y="16.0" width="8.3" height="8.6" fill="#aea6a7"/><rect x="656.3" y="16.0" width="7.7" height="8.6" fill="#b7acae"/><rect x="618.0" y="24.0" width="8.3" height="8.6" fill="#a2a8a7"/><rect x="625.7" y="24.0" width="8.3" height="8.6" fill="#a8abab"/><rect x="633.3" y="24.0" width="8.3" height="8.6" fill="#a9a8a9"/><rect x="641.0" y="24.0" width="8.3" height="8.6" fill="#b0acad"/><rect x="648.7" y="24.0" width="8.3" height="8.6" fill="#afa7a9"/><rect x="656.3" y="24.0" width="7.7" height="8.6" fill="#b2a8aa"/><rect x="618.0" y="32.0" width="8.3" height="8.6" fill="#9ca3a3"/><rect x="625.7" y="32.0" width="8.3" height="8.6" fill="#a3a7a7"/><rect x="633.3" y="32.0" width="8.3" height="8.6" fill="#a6a6a7"/><rect x="641.0" y="32.0" width="8.3" height="8.6" fill="#afacad"/><rect x="648.7" y="32.0" width="8.3" height="8.6" fill="#aca5a7"/><rect x="656.3" y="32.0" width="7.7" height="8.6" fill="#afa5a7"/></svg><div style="position:absolute;left:1px;top:159px;width:1025px;height:1px;background:#5c5c5c;"></div><div style="position:absolute;left:0px;top:121px;width:255px;height:39px;line-height:39px;font-size:14px;color:#e8e8e8;text-align:center;letter-spacing:0.2px;font-weight:normal;white-space:nowrap;">Train (1:4)</div><div style="position:absolute;left:256px;top:121px;width:257px;height:39px;line-height:39px;font-size:14px;color:#e8e8e8;text-align:center;letter-spacing:-0.2px;font-weight:normal;white-space:nowrap;">Train</div><div style="position:absolute;left:780px;top:130px;width:20px;height:20px;background:#3bd23f;border:1px solid #0a0a0a;box-sizing:border-box;"></div><div style="position:absolute;left:770px;top:121px;width:257px;height:39px;line-height:39px;font-size:14px;color:#e8e8e8;text-align:center;letter-spacing:-0.3px;font-weight:normal;white-space:nowrap;">PET Bottle</div><svg style="position:absolute;left:0;top:160px" width="1046" height="40" shape-rendering="crispEdges"><rect x="618.0" y="0.0" width="8.3" height="8.6" fill="#96a09f"/><rect x="625.7" y="0.0" width="8.3" height="8.6" fill="#9ea5a4"/><rect x="633.3" y="0.0" width="8.3" height="8.6" fill="#a6a9a8"/><rect x="641.0" y="0.0" width="8.3" height="8.6" fill="#a9a9a9"/><rect x="648.7" y="0.0" width="8.3" height="8.6" fill="#a4a0a0"/><rect x="656.3" y="0.0" width="7.7" height="8.6" fill="#aba3a4"/><rect x="618.0" y="8.0" width="8.3" height="8.6" fill="#9da7a6"/><rect x="625.7" y="8.0" width="8.3" height="8.6" fill="#9da4a3"/><rect x="633.3" y="8.0" width="8.3" height="8.6" fill="#a2a5a5"/><rect x="641.0" y="8.0" width="8.3" height="8.6" fill="#a2a2a2"/><rect x="648.7" y="8.0" width="8.3" height="8.6" fill="#a8a4a5"/><rect x="656.3" y="8.0" width="7.7" height="8.6" fill="#afa8a9"/><rect x="618.0" y="16.0" width="8.3" height="8.6" fill="#9aa4a4"/><rect x="625.7" y="16.0" width="8.3" height="8.6" fill="#979e9d"/><rect x="633.3" y="16.0" width="8.3" height="8.6" fill="#9c9f9f"/><rect x="641.0" y="16.0" width="8.3" height="8.6" fill="#a4a5a5"/><rect x="648.7" y="16.0" width="8.3" height="8.6" fill="#a8a6a6"/><rect x="656.3" y="16.0" width="7.7" height="8.6" fill="#a7a2a2"/><rect x="618.0" y="24.0" width="8.3" height="8.6" fill="#99a3a3"/><rect x="625.7" y="24.0" width="8.3" height="8.6" fill="#9ca3a3"/><rect x="633.3" y="24.0" width="8.3" height="8.6" fill="#999d9d"/><rect x="641.0" y="24.0" width="8.3" height="8.6" fill="#a4a6a6"/><rect x="648.7" y="24.0" width="8.3" height="8.6" fill="#a6a4a5"/><rect x="656.3" y="24.0" width="7.7" height="8.6" fill="#a9a5a5"/><rect x="618.0" y="32.0" width="8.3" height="8.6" fill="#9aa4a4"/><rect x="625.7" y="32.0" width="8.3" height="8.6" fill="#9da4a4"/><rect x="633.3" y="32.0" width="8.3" height="8.6" fill="#9b9f9f"/><rect x="641.0" y="32.0" width="8.3" height="8.6" fill="#a3a5a5"/><rect x="648.7" y="32.0" width="8.3" height="8.6" fill="#a4a3a3"/><rect x="656.3" y="32.0" width="7.7" height="8.6" fill="#9f9c9c"/></svg><div style="position:absolute;left:1px;top:199px;width:1025px;height:1px;background:#5c5c5c;"></div><div style="position:absolute;left:0px;top:161px;width:255px;height:39px;line-height:39px;font-size:14px;color:#e8e8e8;text-align:center;letter-spacing:0.2px;font-weight:normal;white-space:nowrap;">Train (1:5)</div><div style="position:absolute;left:256px;top:161px;width:257px;height:39px;line-height:39px;font-size:14px;color:#e8e8e8;text-align:center;letter-spacing:-0.2px;font-weight:normal;white-space:nowrap;">Train</div><div style="position:absolute;left:780px;top:170px;width:20px;height:20px;background:#3bd23f;border:1px solid #0a0a0a;box-sizing:border-box;"></div><div style="position:absolute;left:770px;top:161px;width:257px;height:39px;line-height:39px;font-size:14px;color:#e8e8e8;text-align:center;letter-spacing:-0.3px;font-weight:normal;white-space:nowrap;">PET Bottle</div><div style="position:absolute;left:1px;top:200px;width:1025px;height:40px;background:#1b4069;"></div><svg style="position:absolute;left:0;top:200px" width="1046" height="40" shape-rendering="crispEdges"><rect x="618.0" y="0.0" width="8.3" height="8.6" fill="#9fa7a9"/><rect x="625.7" y="0.0" width="8.3" height="8.6" fill="#a3aaab"/><rect x="633.3" y="0.0" width="8.3" height="8.6" fill="#a7adae"/><rect x="641.0" y="0.0" width="8.3" height="8.6" fill="#a8adae"/><rect x="648.7" y="0.0" width="8.3" height="8.6" fill="#a4a8a9"/><rect x="656.3" y="0.0" width="7.7" height="8.6" fill="#a9abac"/><rect x="618.0" y="8.0" width="8.3" height="8.6" fill="#9ea6a8"/><rect x="625.7" y="8.0" width="8.3" height="8.6" fill="#a0a7a9"/><rect x="633.3" y="8.0" width="8.3" height="8.6" fill="#a9afb1"/><rect x="641.0" y="8.0" width="8.3" height="8.6" fill="#aaafb0"/><rect x="648.7" y="8.0" width="8.3" height="8.6" fill="#abaeaf"/><rect x="656.3" y="8.0" width="7.7" height="8.6" fill="#a6a8a9"/><rect x="618.0" y="16.0" width="8.3" height="8.6" fill="#a6aeb0"/><rect x="625.7" y="16.0" width="8.3" height="8.6" fill="#a3aaac"/><rect x="633.3" y="16.0" width="8.3" height="8.6" fill="#a4aaac"/><rect x="641.0" y="16.0" width="8.3" height="8.6" fill="#a2a7a9"/><rect x="648.7" y="16.0" width="8.3" height="8.6" fill="#a7aaac"/><rect x="656.3" y="16.0" width="7.7" height="8.6" fill="#acafb0"/><rect x="618.0" y="24.0" width="8.3" height="8.6" fill="#9ca4a6"/><rect x="625.7" y="24.0" width="8.3" height="8.6" fill="#a4abad"/><rect x="633.3" y="24.0" width="8.3" height="8.6" fill="#a2a9aa"/><rect x="641.0" y="24.0" width="8.3" height="8.6" fill="#a3a8aa"/><rect x="648.7" y="24.0" width="8.3" height="8.6" fill="#a6aaac"/><rect x="656.3" y="24.0" width="7.7" height="8.6" fill="#a8abad"/><rect x="618.0" y="32.0" width="8.3" height="8.6" fill="#9ba4a6"/><rect x="625.7" y="32.0" width="8.3" height="8.6" fill="#9ca4a6"/><rect x="633.3" y="32.0" width="8.3" height="8.6" fill="#9ca3a5"/><rect x="641.0" y="32.0" width="8.3" height="8.6" fill="#a5aaac"/><rect x="648.7" y="32.0" width="8.3" height="8.6" fill="#a4a8aa"/><rect x="656.3" y="32.0" width="7.7" height="8.6" fill="#a5a8aa"/></svg><div style="position:absolute;left:1px;top:239px;width:1025px;height:1px;background:#5c5c5c;"></div><div style="position:absolute;left:1px;top:200px;width:1025px;height:39px;background:transparent;border:1px solid #e6e61e;border-left:none;box-sizing:border-box;"></div><div style="position:absolute;left:0px;top:201px;width:255px;height:39px;line-height:39px;font-size:14px;color:#f2f2f2;text-align:center;letter-spacing:0.2px;font-weight:normal;white-space:nowrap;">Train (1:6)</div><div style="position:absolute;left:256px;top:201px;width:257px;height:39px;line-height:39px;font-size:14px;color:#f2f2f2;text-align:center;letter-spacing:-0.2px;font-weight:normal;white-space:nowrap;">Train</div><div style="position:absolute;left:780px;top:210px;width:20px;height:20px;background:#3bd23f;border:1px solid #0a0a0a;box-sizing:border-box;"></div><div style="position:absolute;left:770px;top:201px;width:257px;height:39px;line-height:39px;font-size:14px;color:#f2f2f2;text-align:center;letter-spacing:-0.3px;font-weight:normal;white-space:nowrap;">PET Bottle</div><svg style="position:absolute;left:0;top:240px" width="1046" height="40" shape-rendering="crispEdges"><rect x="612.0" y="0.0" width="8.9" height="8.6" fill="#bba8a7"/><rect x="620.3" y="0.0" width="8.9" height="8.6" fill="#bca8a7"/><rect x="628.6" y="0.0" width="8.9" height="8.6" fill="#b7a3a2"/><rect x="636.9" y="0.0" width="8.9" height="8.6" fill="#baa4a4"/><rect x="645.1" y="0.0" width="8.9" height="8.6" fill="#bfa9a9"/><rect x="653.4" y="0.0" width="8.9" height="8.6" fill="#baa3a4"/><rect x="661.7" y="0.0" width="8.3" height="8.6" fill="#bca4a5"/><rect x="612.0" y="8.0" width="8.9" height="8.6" fill="#bdaaaa"/><rect x="620.3" y="8.0" width="8.9" height="8.6" fill="#b7a4a3"/><rect x="628.6" y="8.0" width="8.9" height="8.6" fill="#b9a4a4"/><rect x="636.9" y="8.0" width="8.9" height="8.6" fill="#b9a4a4"/><rect x="645.1" y="8.0" width="8.9" height="8.6" fill="#bca6a7"/><rect x="653.4" y="8.0" width="8.9" height="8.6" fill="#bba4a4"/><rect x="661.7" y="8.0" width="8.3" height="8.6" fill="#bba3a4"/><rect x="612.0" y="16.0" width="8.9" height="8.6" fill="#b9a6a6"/><rect x="620.3" y="16.0" width="8.9" height="8.6" fill="#b6a3a2"/><rect x="628.6" y="16.0" width="8.9" height="8.6" fill="#baa6a6"/><rect x="636.9" y="16.0" width="8.9" height="8.6" fill="#bba6a6"/><rect x="645.1" y="16.0" width="8.9" height="8.6" fill="#c0aaab"/><rect x="653.4" y="16.0" width="8.9" height="8.6" fill="#bca6a6"/><rect x="661.7" y="16.0" width="8.3" height="8.6" fill="#c2aaab"/><rect x="612.0" y="24.0" width="8.9" height="8.6" fill="#bcaaaa"/><rect x="620.3" y="24.0" width="8.9" height="8.6" fill="#b6a3a3"/><rect x="628.6" y="24.0" width="8.9" height="8.6" fill="#bca8a8"/><rect x="636.9" y="24.0" width="8.9" height="8.6" fill="#b8a3a4"/><rect x="645.1" y="24.0" width="8.9" height="8.6" fill="#b7a2a2"/><rect x="653.4" y="24.0" width="8.9" height="8.6" fill="#b9a2a3"/><rect x="661.7" y="24.0" width="8.3" height="8.6" fill="#baa3a4"/><rect x="612.0" y="32.0" width="8.9" height="8.6" fill="#b9a7a7"/><rect x="620.3" y="32.0" width="8.9" height="8.6" fill="#b8a5a5"/><rect x="628.6" y="32.0" width="8.9" height="8.6" fill="#baa7a7"/><rect x="636.9" y="32.0" width="8.9" height="8.6" fill="#bfaaab"/><rect x="645.1" y="32.0" width="8.9" height="8.6" fill="#b9a4a4"/><rect x="653.4" y="32.0" width="8.9" height="8.6" fill="#c0aaab"/><rect x="661.7" y="32.0" width="8.3" height="8.6" fill="#bfa8a9"/></svg><div style="position:absolute;left:1px;top:279px;width:1025px;height:1px;background:#5c5c5c;"></div><div style="position:absolute;left:0px;top:241px;width:255px;height:39px;line-height:39px;font-size:14px;color:#e8e8e8;text-align:center;letter-spacing:0.2px;font-weight:normal;white-space:nowrap;">Train (1:7)</div><div style="position:absolute;left:256px;top:241px;width:257px;height:39px;line-height:39px;font-size:14px;color:#e8e8e8;text-align:center;letter-spacing:-0.2px;font-weight:normal;white-space:nowrap;">Train</div><div style="position:absolute;left:780px;top:250px;width:20px;height:20px;background:#3bd23f;border:1px solid #0a0a0a;box-sizing:border-box;"></div><div style="position:absolute;left:770px;top:241px;width:257px;height:39px;line-height:39px;font-size:14px;color:#e8e8e8;text-align:center;letter-spacing:-0.3px;font-weight:normal;white-space:nowrap;">PET Bottle</div><svg style="position:absolute;left:0;top:280px" width="1046" height="40" shape-rendering="crispEdges"><rect x="618.0" y="0.0" width="8.3" height="8.6" fill="#bca7a9"/><rect x="625.7" y="0.0" width="8.3" height="8.6" fill="#bca7a9"/><rect x="633.3" y="0.0" width="8.3" height="8.6" fill="#c2acae"/><rect x="641.0" y="0.0" width="8.3" height="8.6" fill="#bea9ab"/><rect x="648.7" y="0.0" width="8.3" height="8.6" fill="#bca6a8"/><rect x="656.3" y="0.0" width="7.7" height="8.6" fill="#bba5a7"/><rect x="618.0" y="8.0" width="8.3" height="8.6" fill="#bba7a9"/><rect x="625.7" y="8.0" width="8.3" height="8.6" fill="#b7a2a4"/><rect x="633.3" y="8.0" width="8.3" height="8.6" fill="#b7a2a4"/><rect x="641.0" y="8.0" width="8.3" height="8.6" fill="#baa5a7"/><rect x="648.7" y="8.0" width="8.3" height="8.6" fill="#bfa9ab"/><rect x="656.3" y="8.0" width="7.7" height="8.6" fill="#c3adaf"/><rect x="618.0" y="16.0" width="8.3" height="8.6" fill="#bba7a9"/><rect x="625.7" y="16.0" width="8.3" height="8.6" fill="#b8a3a5"/><rect x="633.3" y="16.0" width="8.3" height="8.6" fill="#bba6a8"/><rect x="641.0" y="16.0" width="8.3" height="8.6" fill="#bda7a9"/><rect x="648.7" y="16.0" width="8.3" height="8.6" fill="#bda8aa"/><rect x="656.3" y="16.0" width="7.7" height="8.6" fill="#bda7a9"/><rect x="618.0" y="24.0" width="8.3" height="8.6" fill="#b8a4a6"/><rect x="625.7" y="24.0" width="8.3" height="8.6" fill="#beaaac"/><rect x="633.3" y="24.0" width="8.3" height="8.6" fill="#b7a2a4"/><rect x="641.0" y="24.0" width="8.3" height="8.6" fill="#c1abad"/><rect x="648.7" y="24.0" width="8.3" height="8.6" fill="#bfaaac"/><rect x="656.3" y="24.0" width="7.7" height="8.6" fill="#c1abad"/><rect x="618.0" y="32.0" width="8.3" height="8.6" fill="#bda9ab"/><rect x="625.7" y="32.0" width="8.3" height="8.6" fill="#bda9ab"/><rect x="633.3" y="32.0" width="8.3" height="8.6" fill="#bca7a9"/><rect x="641.0" y="32.0" width="8.3" height="8.6" fill="#baa5a7"/><rect x="648.7" y="32.0" width="8.3" height="8.6" fill="#bda7a9"/><rect x="656.3" y="32.0" width="7.7" height="8.6" fill="#c1abad"/></svg><div style="position:absolute;left:1px;top:319px;width:1025px;height:1px;background:#5c5c5c;"></div><div style="position:absolute;left:0px;top:281px;width:255px;height:39px;line-height:39px;font-size:14px;color:#e8e8e8;text-align:center;letter-spacing:0.2px;font-weight:normal;white-space:nowrap;">Train (1:8)</div><div style="position:absolute;left:256px;top:281px;width:257px;height:39px;line-height:39px;font-size:14px;color:#e8e8e8;text-align:center;letter-spacing:-0.2px;font-weight:normal;white-space:nowrap;">Train</div><div style="position:absolute;left:780px;top:290px;width:20px;height:20px;background:#3bd23f;border:1px solid #0a0a0a;box-sizing:border-box;"></div><div style="position:absolute;left:770px;top:281px;width:257px;height:39px;line-height:39px;font-size:14px;color:#e8e8e8;text-align:center;letter-spacing:-0.3px;font-weight:normal;white-space:nowrap;">PET Bottle</div><svg style="position:absolute;left:0;top:320px" width="1046" height="40" shape-rendering="crispEdges"><rect x="618.0" y="0.0" width="8.3" height="8.6" fill="#b8a5a7"/><rect x="625.7" y="0.0" width="8.3" height="8.6" fill="#b7a4a6"/><rect x="633.3" y="0.0" width="8.3" height="8.6" fill="#bba8aa"/><rect x="641.0" y="0.0" width="8.3" height="8.6" fill="#bca9ab"/><rect x="648.7" y="0.0" width="8.3" height="8.6" fill="#bdaaac"/><rect x="656.3" y="0.0" width="7.7" height="8.6" fill="#b6a3a5"/><rect x="618.0" y="8.0" width="8.3" height="8.6" fill="#b1a1a3"/><rect x="625.7" y="8.0" width="8.3" height="8.6" fill="#b3a4a5"/><rect x="633.3" y="8.0" width="8.3" height="8.6" fill="#b9a9aa"/><rect x="641.0" y="8.0" width="8.3" height="8.6" fill="#b8a8aa"/><rect x="648.7" y="8.0" width="8.3" height="8.6" fill="#b5a6a7"/><rect x="656.3" y="8.0" width="7.7" height="8.6" fill="#bbabad"/><rect x="618.0" y="16.0" width="8.3" height="8.6" fill="#b4a8a9"/><rect x="625.7" y="16.0" width="8.3" height="8.6" fill="#ada1a2"/><rect x="633.3" y="16.0" width="8.3" height="8.6" fill="#b0a4a5"/><rect x="641.0" y="16.0" width="8.3" height="8.6" fill="#b4a8a9"/><rect x="648.7" y="16.0" width="8.3" height="8.6" fill="#b6a9aa"/><rect x="656.3" y="16.0" width="7.7" height="8.6" fill="#b2a6a7"/><rect x="618.0" y="24.0" width="8.3" height="8.6" fill="#aea6a6"/><rect x="625.7" y="24.0" width="8.3" height="8.6" fill="#b3aaab"/><rect x="633.3" y="24.0" width="8.3" height="8.6" fill="#aba2a3"/><rect x="641.0" y="24.0" width="8.3" height="8.6" fill="#ada5a5"/><rect x="648.7" y="24.0" width="8.3" height="8.6" fill="#b2a9a9"/><rect x="656.3" y="24.0" width="7.7" height="8.6" fill="#b2a9aa"/><rect x="618.0" y="32.0" width="8.3" height="8.6" fill="#aaa5a5"/><rect x="625.7" y="32.0" width="8.3" height="8.6" fill="#a6a1a1"/><rect x="633.3" y="32.0" width="8.3" height="8.6" fill="#ada8a8"/><rect x="641.0" y="32.0" width="8.3" height="8.6" fill="#a8a2a2"/><rect x="648.7" y="32.0" width="8.3" height="8.6" fill="#b0aaaa"/><rect x="656.3" y="32.0" width="7.7" height="8.6" fill="#a7a1a1"/></svg><div style="position:absolute;left:1px;top:359px;width:1025px;height:1px;background:#5c5c5c;"></div><div style="position:absolute;left:0px;top:321px;width:255px;height:39px;line-height:39px;font-size:14px;color:#e8e8e8;text-align:center;letter-spacing:0.2px;font-weight:normal;white-space:nowrap;">Train (1:9)</div><div style="position:absolute;left:256px;top:321px;width:257px;height:39px;line-height:39px;font-size:14px;color:#e8e8e8;text-align:center;letter-spacing:-0.2px;font-weight:normal;white-space:nowrap;">Train</div><div style="position:absolute;left:780px;top:330px;width:20px;height:20px;background:#3bd23f;border:1px solid #0a0a0a;box-sizing:border-box;"></div><div style="position:absolute;left:770px;top:321px;width:257px;height:39px;line-height:39px;font-size:14px;color:#e8e8e8;text-align:center;letter-spacing:-0.3px;font-weight:normal;white-space:nowrap;">PET Bottle</div><svg style="position:absolute;left:0;top:360px" width="1046" height="40" shape-rendering="crispEdges"><rect x="618.0" y="0.0" width="8.3" height="8.6" fill="#aca7a7"/><rect x="625.7" y="0.0" width="8.3" height="8.6" fill="#a8a2a2"/><rect x="633.3" y="0.0" width="8.3" height="8.6" fill="#afa8a8"/><rect x="641.0" y="0.0" width="8.3" height="8.6" fill="#aca4a4"/><rect x="648.7" y="0.0" width="8.3" height="8.6" fill="#aaa1a1"/><rect x="656.3" y="0.0" width="7.7" height="8.6" fill="#b0a6a6"/><rect x="618.0" y="8.0" width="8.3" height="8.6" fill="#aaa3a3"/><rect x="625.7" y="8.0" width="8.3" height="8.6" fill="#afa7a7"/><rect x="633.3" y="8.0" width="8.3" height="8.6" fill="#b3abab"/><rect x="641.0" y="8.0" width="8.3" height="8.6" fill="#b3aaaa"/><rect x="648.7" y="8.0" width="8.3" height="8.6" fill="#aea3a3"/><rect x="656.3" y="8.0" width="7.7" height="8.6" fill="#aea3a3"/><rect x="618.0" y="16.0" width="8.3" height="8.6" fill="#aea5a5"/><rect x="625.7" y="16.0" width="8.3" height="8.6" fill="#b2a8a8"/><rect x="633.3" y="16.0" width="8.3" height="8.6" fill="#afa5a5"/><rect x="641.0" y="16.0" width="8.3" height="8.6" fill="#b5aaaa"/><rect x="648.7" y="16.0" width="8.3" height="8.6" fill="#b4a9a9"/><rect x="656.3" y="16.0" width="7.7" height="8.6" fill="#b5a9a9"/><rect x="618.0" y="24.0" width="8.3" height="8.6" fill="#b7acac"/><rect x="625.7" y="24.0" width="8.3" height="8.6" fill="#afa5a5"/><rect x="633.3" y="24.0" width="8.3" height="8.6" fill="#b3a8a8"/><rect x="641.0" y="24.0" width="8.3" height="8.6" fill="#b3a7a7"/><rect x="648.7" y="24.0" width="8.3" height="8.6" fill="#b7abab"/><rect x="656.3" y="24.0" width="7.7" height="8.6" fill="#b2a5a5"/><rect x="618.0" y="32.0" width="8.3" height="8.6" fill="#b6aaaa"/><rect x="625.7" y="32.0" width="8.3" height="8.6" fill="#b1a5a5"/><rect x="633.3" y="32.0" width="8.3" height="8.6" fill="#b9acac"/><rect x="641.0" y="32.0" width="8.3" height="8.6" fill="#bcafaf"/><rect x="648.7" y="32.0" width="8.3" height="8.6" fill="#baacac"/><rect x="656.3" y="32.0" width="7.7" height="8.6" fill="#bdafaf"/></svg><div style="position:absolute;left:1px;top:399px;width:1025px;height:1px;background:#5c5c5c;"></div><div style="position:absolute;left:0px;top:361px;width:255px;height:39px;line-height:39px;font-size:14px;color:#e8e8e8;text-align:center;letter-spacing:0.2px;font-weight:normal;white-space:nowrap;">Train (1:10)</div><div style="position:absolute;left:256px;top:361px;width:257px;height:39px;line-height:39px;font-size:14px;color:#e8e8e8;text-align:center;letter-spacing:-0.2px;font-weight:normal;white-space:nowrap;">Train</div><div style="position:absolute;left:780px;top:370px;width:20px;height:20px;background:#3bd23f;border:1px solid #0a0a0a;box-sizing:border-box;"></div><div style="position:absolute;left:770px;top:361px;width:257px;height:39px;line-height:39px;font-size:14px;color:#e8e8e8;text-align:center;letter-spacing:-0.3px;font-weight:normal;white-space:nowrap;">PET Bottle</div><svg style="position:absolute;left:0;top:400px" width="1046" height="40" shape-rendering="crispEdges"><rect x="618.0" y="0.0" width="8.3" height="8.6" fill="#aeaaaa"/><rect x="625.7" y="0.0" width="8.3" height="8.6" fill="#a9a4a4"/><rect x="633.3" y="0.0" width="8.3" height="8.6" fill="#aea9a9"/><rect x="641.0" y="0.0" width="8.3" height="8.6" fill="#aea9a9"/><rect x="648.7" y="0.0" width="8.3" height="8.6" fill="#ada8a8"/><rect x="656.3" y="0.0" width="7.7" height="8.6" fill="#a9a3a3"/><rect x="618.0" y="8.0" width="8.3" height="8.6" fill="#a7a4a4"/><rect x="625.7" y="8.0" width="8.3" height="8.6" fill="#a4a1a1"/><rect x="633.3" y="8.0" width="8.3" height="8.6" fill="#a29e9e"/><rect x="641.0" y="8.0" width="8.3" height="8.6" fill="#a8a4a4"/><rect x="648.7" y="8.0" width="8.3" height="8.6" fill="#a5a1a1"/><rect x="656.3" y="8.0" width="7.7" height="8.6" fill="#a29d9d"/><rect x="618.0" y="16.0" width="8.3" height="8.6" fill="#a6a3a3"/><rect x="625.7" y="16.0" width="8.3" height="8.6" fill="#9f9c9c"/><rect x="633.3" y="16.0" width="8.3" height="8.6" fill="#a3a0a0"/><rect x="641.0" y="16.0" width="8.3" height="8.6" fill="#a8a5a5"/><rect x="648.7" y="16.0" width="8.3" height="8.6" fill="#a39f9f"/><rect x="656.3" y="16.0" width="7.7" height="8.6" fill="#a4a1a1"/><rect x="618.0" y="24.0" width="8.3" height="8.6" fill="#9e9c9c"/><rect x="625.7" y="24.0" width="8.3" height="8.6" fill="#9e9c9c"/><rect x="633.3" y="24.0" width="8.3" height="8.6" fill="#9e9c9c"/><rect x="641.0" y="24.0" width="8.3" height="8.6" fill="#a4a2a2"/><rect x="648.7" y="24.0" width="8.3" height="8.6" fill="#a09d9d"/><rect x="656.3" y="24.0" width="7.7" height="8.6" fill="#a09e9e"/><rect x="618.0" y="32.0" width="8.3" height="8.6" fill="#9a9999"/><rect x="625.7" y="32.0" width="8.3" height="8.6" fill="#969595"/><rect x="633.3" y="32.0" width="8.3" height="8.6" fill="#9a9999"/><rect x="641.0" y="32.0" width="8.3" height="8.6" fill="#9c9b9b"/><rect x="648.7" y="32.0" width="8.3" height="8.6" fill="#999898"/><rect x="656.3" y="32.0" width="7.7" height="8.6" fill="#9e9d9d"/></svg><div style="position:absolute;left:1px;top:439px;width:1025px;height:1px;background:#5c5c5c;"></div><div style="position:absolute;left:0px;top:401px;width:255px;height:39px;line-height:39px;font-size:14px;color:#e8e8e8;text-align:center;letter-spacing:0.2px;font-weight:normal;white-space:nowrap;">Train (1:11)</div><div style="position:absolute;left:256px;top:401px;width:257px;height:39px;line-height:39px;font-size:14px;color:#e8e8e8;text-align:center;letter-spacing:-0.2px;font-weight:normal;white-space:nowrap;">Train</div><div style="position:absolute;left:780px;top:410px;width:20px;height:20px;background:#3bd23f;border:1px solid #0a0a0a;box-sizing:border-box;"></div><div style="position:absolute;left:770px;top:401px;width:257px;height:39px;line-height:39px;font-size:14px;color:#e8e8e8;text-align:center;letter-spacing:-0.3px;font-weight:normal;white-space:nowrap;">PET Bottle</div><svg style="position:absolute;left:0;top:440px" width="1046" height="40" shape-rendering="crispEdges"><rect x="618.0" y="0.0" width="8.3" height="8.6" fill="#a6a8a9"/><rect x="625.7" y="0.0" width="8.3" height="8.6" fill="#aaacad"/><rect x="633.3" y="0.0" width="8.3" height="8.6" fill="#a1a2a3"/><rect x="641.0" y="0.0" width="8.3" height="8.6" fill="#acadae"/><rect x="648.7" y="0.0" width="8.3" height="8.6" fill="#a9a9aa"/><rect x="656.3" y="0.0" width="7.7" height="8.6" fill="#a9a9aa"/><rect x="618.0" y="8.0" width="8.3" height="8.6" fill="#a3a5a7"/><rect x="625.7" y="8.0" width="8.3" height="8.6" fill="#a3a6a7"/><rect x="633.3" y="8.0" width="8.3" height="8.6" fill="#a1a3a5"/><rect x="641.0" y="8.0" width="8.3" height="8.6" fill="#a4a5a7"/><rect x="648.7" y="8.0" width="8.3" height="8.6" fill="#a9aaab"/><rect x="656.3" y="8.0" width="7.7" height="8.6" fill="#adadaf"/><rect x="618.0" y="16.0" width="8.3" height="8.6" fill="#9fa2a4"/><rect x="625.7" y="16.0" width="8.3" height="8.6" fill="#a3a5a7"/><rect x="633.3" y="16.0" width="8.3" height="8.6" fill="#a8aaac"/><rect x="641.0" y="16.0" width="8.3" height="8.6" fill="#abacae"/><rect x="648.7" y="16.0" width="8.3" height="8.6" fill="#abacae"/><rect x="656.3" y="16.0" width="7.7" height="8.6" fill="#a6a6a8"/><rect x="618.0" y="24.0" width="8.3" height="8.6" fill="#a3a7a9"/><rect x="625.7" y="24.0" width="8.3" height="8.6" fill="#a3a6a9"/><rect x="633.3" y="24.0" width="8.3" height="8.6" fill="#a5a8aa"/><rect x="641.0" y="24.0" width="8.3" height="8.6" fill="#a9abad"/><rect x="648.7" y="24.0" width="8.3" height="8.6" fill="#a2a2a5"/><rect x="656.3" y="24.0" width="7.7" height="8.6" fill="#a9a9ab"/><rect x="618.0" y="32.0" width="8.3" height="8.6" fill="#a1a6a9"/><rect x="625.7" y="32.0" width="8.3" height="8.6" fill="#a1a5a8"/><rect x="633.3" y="32.0" width="8.3" height="8.6" fill="#9ea1a4"/><rect x="641.0" y="32.0" width="8.3" height="8.6" fill="#a4a6a9"/><rect x="648.7" y="32.0" width="8.3" height="8.6" fill="#a1a2a5"/><rect x="656.3" y="32.0" width="7.7" height="8.6" fill="#a8a8ab"/></svg><div style="position:absolute;left:1px;top:479px;width:1025px;height:1px;background:#5c5c5c;"></div><div style="position:absolute;left:0px;top:441px;width:255px;height:39px;line-height:39px;font-size:14px;color:#e8e8e8;text-align:center;letter-spacing:0.2px;font-weight:normal;white-space:nowrap;">Train (1:12)</div><div style="position:absolute;left:256px;top:441px;width:257px;height:39px;line-height:39px;font-size:14px;color:#e8e8e8;text-align:center;letter-spacing:-0.2px;font-weight:normal;white-space:nowrap;">Train</div><div style="position:absolute;left:780px;top:450px;width:20px;height:20px;background:#3bd23f;border:1px solid #0a0a0a;box-sizing:border-box;"></div><div style="position:absolute;left:770px;top:441px;width:257px;height:39px;line-height:39px;font-size:14px;color:#e8e8e8;text-align:center;letter-spacing:-0.3px;font-weight:normal;white-space:nowrap;">PET Bottle</div><svg style="position:absolute;left:0;top:480px" width="1046" height="40" shape-rendering="crispEdges"><rect x="612.0" y="0.0" width="8.9" height="8.6" fill="#c4adaf"/><rect x="620.3" y="0.0" width="8.9" height="8.6" fill="#bea7a9"/><rect x="628.6" y="0.0" width="8.9" height="8.6" fill="#c3acae"/><rect x="636.9" y="0.0" width="8.9" height="8.6" fill="#bda6a8"/><rect x="645.1" y="0.0" width="8.9" height="8.6" fill="#bda6a8"/><rect x="653.4" y="0.0" width="8.9" height="8.6" fill="#c4adaf"/><rect x="661.7" y="0.0" width="8.3" height="8.6" fill="#c3acae"/><rect x="612.0" y="8.0" width="8.9" height="8.6" fill="#c2abad"/><rect x="620.3" y="8.0" width="8.9" height="8.6" fill="#bba4a6"/><rect x="628.6" y="8.0" width="8.9" height="8.6" fill="#c2abad"/><rect x="636.9" y="8.0" width="8.9" height="8.6" fill="#c1aaac"/><rect x="645.1" y="8.0" width="8.9" height="8.6" fill="#baa3a5"/><rect x="653.4" y="8.0" width="8.9" height="8.6" fill="#c0aaac"/><rect x="661.7" y="8.0" width="8.3" height="8.6" fill="#b9a2a4"/><rect x="612.0" y="16.0" width="8.9" height="8.6" fill="#c2abad"/><rect x="620.3" y="16.0" width="8.9" height="8.6" fill="#c4adaf"/><rect x="628.6" y="16.0" width="8.9" height="8.6" fill="#bba4a6"/><rect x="636.9" y="16.0" width="8.9" height="8.6" fill="#c3acae"/><rect x="645.1" y="16.0" width="8.9" height="8.6" fill="#c0aaac"/><rect x="653.4" y="16.0" width="8.9" height="8.6" fill="#b9a2a4"/><rect x="661.7" y="16.0" width="8.3" height="8.6" fill="#b9a2a4"/><rect x="612.0" y="24.0" width="8.9" height="8.6" fill="#bfa8aa"/><rect x="620.3" y="24.0" width="8.9" height="8.6" fill="#c2abad"/><rect x="628.6" y="24.0" width="8.9" height="8.6" fill="#bea7a9"/><rect x="636.9" y="24.0" width="8.9" height="8.6" fill="#c3adaf"/><rect x="645.1" y="24.0" width="8.9" height="8.6" fill="#c3acae"/><rect x="653.4" y="24.0" width="8.9" height="8.6" fill="#bea8aa"/><rect x="661.7" y="24.0" width="8.3" height="8.6" fill="#bfa9ab"/><rect x="612.0" y="32.0" width="8.9" height="8.6" fill="#bea7a9"/><rect x="620.3" y="32.0" width="8.9" height="8.6" fill="#bfa8aa"/><rect x="628.6" y="32.0" width="8.9" height="8.6" fill="#c1aaac"/><rect x="636.9" y="32.0" width="8.9" height="8.6" fill="#c1abad"/><rect x="645.1" y="32.0" width="8.9" height="8.6" fill="#bda6a8"/><rect x="653.4" y="32.0" width="8.9" height="8.6" fill="#bea8aa"/><rect x="661.7" y="32.0" width="8.3" height="8.6" fill="#baa4a6"/></svg><div style="position:absolute;left:1px;top:519px;width:1025px;height:1px;background:#5c5c5c;"></div><div style="position:absolute;left:0px;top:481px;width:255px;height:39px;line-height:39px;font-size:14px;color:#e8e8e8;text-align:center;letter-spacing:0.2px;font-weight:normal;white-space:nowrap;">Train (1:13)</div><div style="position:absolute;left:256px;top:481px;width:257px;height:39px;line-height:39px;font-size:14px;color:#e8e8e8;text-align:center;letter-spacing:-0.2px;font-weight:normal;white-space:nowrap;">Train</div><div style="position:absolute;left:780px;top:490px;width:20px;height:20px;background:#3bd23f;border:1px solid #0a0a0a;box-sizing:border-box;"></div><div style="position:absolute;left:770px;top:481px;width:257px;height:39px;line-height:39px;font-size:14px;color:#e8e8e8;text-align:center;letter-spacing:-0.3px;font-weight:normal;white-space:nowrap;">PET Bottle</div><svg style="position:absolute;left:0;top:520px" width="1046" height="40" shape-rendering="crispEdges"><rect x="618.0" y="0.0" width="8.3" height="8.6" fill="#baa2a5"/><rect x="625.7" y="0.0" width="8.3" height="8.6" fill="#c0a9ab"/><rect x="633.3" y="0.0" width="8.3" height="8.6" fill="#b9a2a4"/><rect x="641.0" y="0.0" width="8.3" height="8.6" fill="#c0a9ab"/><rect x="648.7" y="0.0" width="8.3" height="8.6" fill="#bea7a9"/><rect x="656.3" y="0.0" width="7.7" height="8.6" fill="#baa3a5"/><rect x="618.0" y="8.0" width="8.3" height="8.6" fill="#bca4a7"/><rect x="625.7" y="8.0" width="8.3" height="8.6" fill="#bca4a7"/><rect x="633.3" y="8.0" width="8.3" height="8.6" fill="#baa2a5"/><rect x="641.0" y="8.0" width="8.3" height="8.6" fill="#bda6a9"/><rect x="648.7" y="8.0" width="8.3" height="8.6" fill="#bea7aa"/><rect x="656.3" y="8.0" width="7.7" height="8.6" fill="#c2acae"/><rect x="618.0" y="16.0" width="8.3" height="8.6" fill="#bea6a9"/><rect x="625.7" y="16.0" width="8.3" height="8.6" fill="#c2abae"/><rect x="633.3" y="16.0" width="8.3" height="8.6" fill="#c1aaad"/><rect x="641.0" y="16.0" width="8.3" height="8.6" fill="#b9a2a5"/><rect x="648.7" y="16.0" width="8.3" height="8.6" fill="#c2abae"/><rect x="656.3" y="16.0" width="7.7" height="8.6" fill="#bda7a9"/><rect x="618.0" y="24.0" width="8.3" height="8.6" fill="#bda6a9"/><rect x="625.7" y="24.0" width="8.3" height="8.6" fill="#c1aaad"/><rect x="633.3" y="24.0" width="8.3" height="8.6" fill="#bda6a9"/><rect x="641.0" y="24.0" width="8.3" height="8.6" fill="#c1abae"/><rect x="648.7" y="24.0" width="8.3" height="8.6" fill="#bea8ab"/><rect x="656.3" y="24.0" width="7.7" height="8.6" fill="#b7a2a4"/><rect x="618.0" y="32.0" width="8.3" height="8.6" fill="#c0a9ac"/><rect x="625.7" y="32.0" width="8.3" height="8.6" fill="#b8a2a5"/><rect x="633.3" y="32.0" width="8.3" height="8.6" fill="#c1abae"/><rect x="641.0" y="32.0" width="8.3" height="8.6" fill="#bfa9ac"/><rect x="648.7" y="32.0" width="8.3" height="8.6" fill="#b7a1a4"/><rect x="656.3" y="32.0" width="7.7" height="8.6" fill="#bba6a8"/></svg><div style="position:absolute;left:1px;top:559px;width:1025px;height:1px;background:#5c5c5c;"></div><div style="position:absolute;left:0px;top:521px;width:255px;height:39px;line-height:39px;font-size:14px;color:#e8e8e8;text-align:center;letter-spacing:0.2px;font-weight:normal;white-space:nowrap;">Train (1:14)</div><div style="position:absolute;left:256px;top:521px;width:257px;height:39px;line-height:39px;font-size:14px;color:#e8e8e8;text-align:center;letter-spacing:-0.2px;font-weight:normal;white-space:nowrap;">Train</div><div style="position:absolute;left:780px;top:530px;width:20px;height:20px;background:#3bd23f;border:1px solid #0a0a0a;box-sizing:border-box;"></div><div style="position:absolute;left:770px;top:521px;width:257px;height:39px;line-height:39px;font-size:14px;color:#e8e8e8;text-align:center;letter-spacing:-0.3px;font-weight:normal;white-space:nowrap;">PET Bottle</div><svg style="position:absolute;left:0;top:560px" width="1046" height="40" shape-rendering="crispEdges"><rect x="618.0" y="0.0" width="8.3" height="8.6" fill="#bea8aa"/><rect x="625.7" y="0.0" width="8.3" height="8.6" fill="#bfa9ab"/><rect x="633.3" y="0.0" width="8.3" height="8.6" fill="#c1abad"/><rect x="641.0" y="0.0" width="8.3" height="8.6" fill="#b9a4a6"/><rect x="648.7" y="0.0" width="8.3" height="8.6" fill="#c0abad"/><rect x="656.3" y="0.0" width="7.7" height="8.6" fill="#b7a2a4"/><rect x="618.0" y="8.0" width="8.3" height="8.6" fill="#c0abad"/><rect x="625.7" y="8.0" width="8.3" height="8.6" fill="#bfaaac"/><rect x="633.3" y="8.0" width="8.3" height="8.6" fill="#b9a5a7"/><rect x="641.0" y="8.0" width="8.3" height="8.6" fill="#bca8aa"/><rect x="648.7" y="8.0" width="8.3" height="8.6" fill="#bca8aa"/><rect x="656.3" y="8.0" width="7.7" height="8.6" fill="#b6a3a5"/><rect x="618.0" y="16.0" width="8.3" height="8.6" fill="#bfabad"/><rect x="625.7" y="16.0" width="8.3" height="8.6" fill="#bca8aa"/><rect x="633.3" y="16.0" width="8.3" height="8.6" fill="#b9a6a8"/><rect x="641.0" y="16.0" width="8.3" height="8.6" fill="#b7a4a6"/><rect x="648.7" y="16.0" width="8.3" height="8.6" fill="#b8a6a7"/><rect x="656.3" y="16.0" width="7.7" height="8.6" fill="#b5a4a5"/><rect x="618.0" y="24.0" width="8.3" height="8.6" fill="#b9a5a7"/><rect x="625.7" y="24.0" width="8.3" height="8.6" fill="#bdaaac"/><rect x="633.3" y="24.0" width="8.3" height="8.6" fill="#bcaaab"/><rect x="641.0" y="24.0" width="8.3" height="8.6" fill="#bcaaac"/><rect x="648.7" y="24.0" width="8.3" height="8.6" fill="#b6a5a7"/><rect x="656.3" y="24.0" width="7.7" height="8.6" fill="#b7a7a8"/><rect x="618.0" y="32.0" width="8.3" height="8.6" fill="#b5a2a4"/><rect x="625.7" y="32.0" width="8.3" height="8.6" fill="#b7a5a7"/><rect x="633.3" y="32.0" width="8.3" height="8.6" fill="#bbaaac"/><rect x="641.0" y="32.0" width="8.3" height="8.6" fill="#b8a8a9"/><rect x="648.7" y="32.0" width="8.3" height="8.6" fill="#b7a8a9"/><rect x="656.3" y="32.0" width="7.7" height="8.6" fill="#b4a6a7"/></svg><div style="position:absolute;left:1px;top:599px;width:1025px;height:1px;background:#5c5c5c;"></div><div style="position:absolute;left:0px;top:561px;width:255px;height:39px;line-height:39px;font-size:14px;color:#e8e8e8;text-align:center;letter-spacing:0.2px;font-weight:normal;white-space:nowrap;">Train (1:15)</div><div style="position:absolute;left:256px;top:561px;width:257px;height:39px;line-height:39px;font-size:14px;color:#e8e8e8;text-align:center;letter-spacing:-0.2px;font-weight:normal;white-space:nowrap;">Train</div><div style="position:absolute;left:780px;top:570px;width:20px;height:20px;background:#3bd23f;border:1px solid #0a0a0a;box-sizing:border-box;"></div><div style="position:absolute;left:770px;top:561px;width:257px;height:39px;line-height:39px;font-size:14px;color:#e8e8e8;text-align:center;letter-spacing:-0.3px;font-weight:normal;white-space:nowrap;">PET Bottle</div><svg style="position:absolute;left:0;top:600px" width="1046" height="40" shape-rendering="crispEdges"><rect x="618.0" y="0.0" width="8.3" height="8.6" fill="#b4a2a4"/><rect x="625.7" y="0.0" width="8.3" height="8.6" fill="#b6a5a6"/><rect x="633.3" y="0.0" width="8.3" height="8.6" fill="#b3a2a3"/><rect x="641.0" y="0.0" width="8.3" height="8.6" fill="#b5a4a5"/><rect x="648.7" y="0.0" width="8.3" height="8.6" fill="#bcabac"/><rect x="656.3" y="0.0" width="7.7" height="8.6" fill="#b7a6a7"/><rect x="618.0" y="8.0" width="8.3" height="8.6" fill="#b3a1a3"/><rect x="625.7" y="8.0" width="8.3" height="8.6" fill="#baa8aa"/><rect x="633.3" y="8.0" width="8.3" height="8.6" fill="#b5a3a5"/><rect x="641.0" y="8.0" width="8.3" height="8.6" fill="#b2a1a3"/><rect x="648.7" y="8.0" width="8.3" height="8.6" fill="#b9a8a9"/><rect x="656.3" y="8.0" width="7.7" height="8.6" fill="#b6a5a6"/><rect x="618.0" y="16.0" width="8.3" height="8.6" fill="#baa8aa"/><rect x="625.7" y="16.0" width="8.3" height="8.6" fill="#baa8aa"/><rect x="633.3" y="16.0" width="8.3" height="8.6" fill="#b5a4a5"/><rect x="641.0" y="16.0" width="8.3" height="8.6" fill="#b5a4a5"/><rect x="648.7" y="16.0" width="8.3" height="8.6" fill="#bbabac"/><rect x="656.3" y="16.0" width="7.7" height="8.6" fill="#b2a2a3"/><rect x="618.0" y="24.0" width="8.3" height="8.6" fill="#b7a5a7"/><rect x="625.7" y="24.0" width="8.3" height="8.6" fill="#b8a7a8"/><rect x="633.3" y="24.0" width="8.3" height="8.6" fill="#b6a5a7"/><rect x="641.0" y="24.0" width="8.3" height="8.6" fill="#bbaaac"/><rect x="648.7" y="24.0" width="8.3" height="8.6" fill="#b1a1a2"/><rect x="656.3" y="24.0" width="7.7" height="8.6" fill="#b7a7a8"/><rect x="618.0" y="32.0" width="8.3" height="8.6" fill="#b9a7a9"/><rect x="625.7" y="32.0" width="8.3" height="8.6" fill="#b5a3a5"/><rect x="633.3" y="32.0" width="8.3" height="8.6" fill="#bbaaac"/><rect x="641.0" y="32.0" width="8.3" height="8.6" fill="#b7a7a8"/><rect x="648.7" y="32.0" width="8.3" height="8.6" fill="#b3a4a5"/><rect x="656.3" y="32.0" width="7.7" height="8.6" fill="#b9aaab"/></svg><div style="position:absolute;left:1px;top:639px;width:1025px;height:1px;background:#5c5c5c;"></div><div style="position:absolute;left:0px;top:601px;width:255px;height:39px;line-height:39px;font-size:14px;color:#e8e8e8;text-align:center;letter-spacing:0.2px;font-weight:normal;white-space:nowrap;">Train (1:16)</div><div style="position:absolute;left:256px;top:601px;width:257px;height:39px;line-height:39px;font-size:14px;color:#e8e8e8;text-align:center;letter-spacing:-0.2px;font-weight:normal;white-space:nowrap;">Train</div><div style="position:absolute;left:780px;top:610px;width:20px;height:20px;background:#3bd23f;border:1px solid #0a0a0a;box-sizing:border-box;"></div><div style="position:absolute;left:770px;top:601px;width:257px;height:39px;line-height:39px;font-size:14px;color:#e8e8e8;text-align:center;letter-spacing:-0.3px;font-weight:normal;white-space:nowrap;">PET Bottle</div><svg style="position:absolute;left:0;top:640px" width="1046" height="40" shape-rendering="crispEdges"><rect x="618.0" y="0.0" width="8.3" height="8.6" fill="#b8a4a6"/><rect x="625.7" y="0.0" width="8.3" height="8.6" fill="#bba7a9"/><rect x="633.3" y="0.0" width="8.3" height="8.6" fill="#b8a4a6"/><rect x="641.0" y="0.0" width="8.3" height="8.6" fill="#b8a5a7"/><rect x="648.7" y="0.0" width="8.3" height="8.6" fill="#b4a1a3"/><rect x="656.3" y="0.0" width="7.7" height="8.6" fill="#b7a4a6"/><rect x="618.0" y="8.0" width="8.3" height="8.6" fill="#baa7a9"/><rect x="625.7" y="8.0" width="8.3" height="8.6" fill="#bba9ab"/><rect x="633.3" y="8.0" width="8.3" height="8.6" fill="#baa9aa"/><rect x="641.0" y="8.0" width="8.3" height="8.6" fill="#b5a4a6"/><rect x="648.7" y="8.0" width="8.3" height="8.6" fill="#b2a2a4"/><rect x="656.3" y="8.0" width="7.7" height="8.6" fill="#b4a5a6"/><rect x="618.0" y="16.0" width="8.3" height="8.6" fill="#b9a7a9"/><rect x="625.7" y="16.0" width="8.3" height="8.6" fill="#b9a8aa"/><rect x="633.3" y="16.0" width="8.3" height="8.6" fill="#b2a3a5"/><rect x="641.0" y="16.0" width="8.3" height="8.6" fill="#b6a9aa"/><rect x="648.7" y="16.0" width="8.3" height="8.6" fill="#b0a4a6"/><rect x="656.3" y="16.0" width="7.7" height="8.6" fill="#b2a7a8"/><rect x="618.0" y="24.0" width="8.3" height="8.6" fill="#b9a7a9"/><rect x="625.7" y="24.0" width="8.3" height="8.6" fill="#b6a7a8"/><rect x="633.3" y="24.0" width="8.3" height="8.6" fill="#afa2a4"/><rect x="641.0" y="24.0" width="8.3" height="8.6" fill="#b3a8a9"/><rect x="648.7" y="24.0" width="8.3" height="8.6" fill="#b1a9a9"/><rect x="656.3" y="24.0" width="7.7" height="8.6" fill="#aea7a8"/><rect x="618.0" y="32.0" width="8.3" height="8.6" fill="#baa9ab"/><rect x="625.7" y="32.0" width="8.3" height="8.6" fill="#b1a3a5"/><rect x="633.3" y="32.0" width="8.3" height="8.6" fill="#aba0a1"/><rect x="641.0" y="32.0" width="8.3" height="8.6" fill="#aaa2a3"/><rect x="648.7" y="32.0" width="8.3" height="8.6" fill="#a8a3a3"/><rect x="656.3" y="32.0" width="7.7" height="8.6" fill="#aaa8a8"/></svg><div style="position:absolute;left:1px;top:679px;width:1025px;height:1px;background:#5c5c5c;"></div><div style="position:absolute;left:0px;top:641px;width:255px;height:39px;line-height:39px;font-size:14px;color:#e8e8e8;text-align:center;letter-spacing:0.2px;font-weight:normal;white-space:nowrap;">Train (1:17)</div><div style="position:absolute;left:256px;top:641px;width:257px;height:39px;line-height:39px;font-size:14px;color:#e8e8e8;text-align:center;letter-spacing:-0.2px;font-weight:normal;white-space:nowrap;">Train</div><div style="position:absolute;left:780px;top:650px;width:20px;height:20px;background:#3bd23f;border:1px solid #0a0a0a;box-sizing:border-box;"></div><div style="position:absolute;left:770px;top:641px;width:257px;height:39px;line-height:39px;font-size:14px;color:#e8e8e8;text-align:center;letter-spacing:-0.3px;font-weight:normal;white-space:nowrap;">PET Bottle</div><svg style="position:absolute;left:0;top:680px" width="1046" height="40" shape-rendering="crispEdges"><rect x="618.0" y="0.0" width="8.3" height="8.6" fill="#b5a8a9"/><rect x="625.7" y="0.0" width="8.3" height="8.6" fill="#ada0a1"/><rect x="633.3" y="0.0" width="8.3" height="8.6" fill="#b6aaab"/><rect x="641.0" y="0.0" width="8.3" height="8.6" fill="#b3a8a9"/><rect x="648.7" y="0.0" width="8.3" height="8.6" fill="#b3a9aa"/><rect x="656.3" y="0.0" width="7.7" height="8.6" fill="#b2a9aa"/><rect x="618.0" y="8.0" width="8.3" height="8.6" fill="#ada1a2"/><rect x="625.7" y="8.0" width="8.3" height="8.6" fill="#ada2a3"/><rect x="633.3" y="8.0" width="8.3" height="8.6" fill="#aea4a5"/><rect x="641.0" y="8.0" width="8.3" height="8.6" fill="#ada4a5"/><rect x="648.7" y="8.0" width="8.3" height="8.6" fill="#aca4a5"/><rect x="656.3" y="8.0" width="7.7" height="8.6" fill="#aca6a6"/><rect x="618.0" y="16.0" width="8.3" height="8.6" fill="#b3a8a9"/><rect x="625.7" y="16.0" width="8.3" height="8.6" fill="#b2a8a8"/><rect x="633.3" y="16.0" width="8.3" height="8.6" fill="#aca4a4"/><rect x="641.0" y="16.0" width="8.3" height="8.6" fill="#a69f9f"/><rect x="648.7" y="16.0" width="8.3" height="8.6" fill="#aba6a6"/><rect x="656.3" y="16.0" width="7.7" height="8.6" fill="#a5a1a1"/><rect x="618.0" y="24.0" width="8.3" height="8.6" fill="#b3a9aa"/><rect x="625.7" y="24.0" width="8.3" height="8.6" fill="#a89fa0"/><rect x="633.3" y="24.0" width="8.3" height="8.6" fill="#a7a0a0"/><rect x="641.0" y="24.0" width="8.3" height="8.6" fill="#aaa4a5"/><rect x="648.7" y="24.0" width="8.3" height="8.6" fill="#a4a0a0"/><rect x="656.3" y="24.0" width="7.7" height="8.6" fill="#a19f9f"/><rect x="618.0" y="32.0" width="8.3" height="8.6" fill="#b1a7a8"/><rect x="625.7" y="32.0" width="8.3" height="8.6" fill="#afa7a8"/><rect x="633.3" y="32.0" width="8.3" height="8.6" fill="#a49e9f"/><rect x="641.0" y="32.0" width="8.3" height="8.6" fill="#a5a1a2"/><rect x="648.7" y="32.0" width="8.3" height="8.6" fill="#9d9b9c"/><rect x="656.3" y="32.0" width="7.7" height="8.6" fill="#9f9f9f"/></svg><div style="position:absolute;left:0px;top:681px;width:255px;height:39px;line-height:39px;font-size:14px;color:#e8e8e8;text-align:center;letter-spacing:0.2px;font-weight:normal;white-space:nowrap;">Train (1:18)</div><div style="position:absolute;left:256px;top:681px;width:257px;height:39px;line-height:39px;font-size:14px;color:#e8e8e8;text-align:center;letter-spacing:-0.2px;font-weight:normal;white-space:nowrap;">Train</div><div style="position:absolute;left:780px;top:690px;width:20px;height:20px;background:#3bd23f;border:1px solid #0a0a0a;box-sizing:border-box;"></div><div style="position:absolute;left:770px;top:681px;width:257px;height:39px;line-height:39px;font-size:14px;color:#e8e8e8;text-align:center;letter-spacing:-0.3px;font-weight:normal;white-space:nowrap;">PET Bottle</div><div style="position:absolute;left:255px;top:0px;width:1px;height:706px;background:#5c5c5c;"></div><div style="position:absolute;left:512px;top:0px;width:1px;height:706px;background:#5c5c5c;"></div><div style="position:absolute;left:769px;top:0px;width:1px;height:706px;background:#5c5c5c;"></div></div>
<div style="position:absolute;left:1866px;top:208px;width:1px;height:706px;background:#5c5c5c;"></div>
<div style="position:absolute;left:1867px;top:168px;width:17px;height:40px;background:#1e1e1e;"></div>
<div style="position:absolute;left:1867px;top:208px;width:17px;height:706px;background:#2e2e2e;"></div>
<div style="position:absolute;left:1867px;top:224px;width:16px;height:54px;background:#5e5e5e;"></div>
<svg style="position:absolute;left:1870px;top:212px;" width="10" height="8" viewBox="0 0 10 8"><path d="M5 1.5L9.2 6H.8z" fill="#6a6a6a"/></svg>
<svg style="position:absolute;left:1870px;top:902px;" width="10" height="8" viewBox="0 0 10 8"><path d="M5 6.5L9.2 2H.8z" fill="#6a6a6a"/></svg>
<div style="position:absolute;left:823px;top:919px;width:339px;height:41px;background:transparent;border:4px solid #ec1c24;box-sizing:border-box;"></div>
<div style="position:absolute;left:840px;top:927px;width:100px;height:26px;line-height:26px;font-size:14px;color:#e8e8e8;text-align:left;letter-spacing:-0.12px;font-weight:normal;white-space:nowrap;">Segmentation</div>
<div style="position:absolute;left:935px;top:927px;width:200px;height:26px;background:#1e1e1e;border:1px solid #666;box-sizing:border-box;"></div>
<div style="position:absolute;left:941px;top:928px;width:120px;height:26px;line-height:26px;font-size:14px;color:#f0f0f0;text-align:left;letter-spacing:-0.33px;font-weight:normal;white-space:nowrap;">Grid and insets</div>
<svg style="position:absolute;left:1115px;top:935px;" width="14" height="10" viewBox="0 0 14 10"><path d="M0.5 0.8h13L7 9.4z" fill="#e8e8e8"/></svg>
<svg style="position:absolute;left:1787px;top:930px;" width="16" height="20" viewBox="0 0 16 20"><path d="M8 3v14" fill="none" stroke="#dcdcdc" stroke-width="2.2"/><path d="M4.600 6.200L8 2.600l3.400 3.600M4.600 13.800L8 17.400l3.400-3.600" fill="none" stroke="#dcdcdc" stroke-width="2"/></svg>
<svg style="position:absolute;left:1819px;top:932px;" width="20" height="16" viewBox="0 0 20 16"><path d="M3 8h14" fill="none" stroke="#dcdcdc" stroke-width="2.200"/><path d="M6.200 4.600L2.600 8l3.600 3.400M13.800 4.600L17.400 8l-3.600 3.400" fill="none" stroke="#dcdcdc" stroke-width="2"/></svg>
<svg style="position:absolute;left:1853px;top:930px;" width="20" height="20" viewBox="0 0 20 20"><path d="M2.100 1.200v17.600M18.200 1.200v17.600" stroke="#dcdcdc" stroke-width="2.200"/><path d="M5.300 9.900h2.100M9.300 9.900h2.100M13.300 9.900h2.100" stroke="#dcdcdc" stroke-width="2.200"/></svg>
<div style="position:absolute;left:500px;top:967px;width:1420px;height:65px;background:linear-gradient(#525252,#3b3b3b 48%,#222222);"></div>
<svg style="position:absolute;left:552px;top:980px;" width="24" height="24" viewBox="0 0 24 24"><path d="M12.2 18.9H4.6a1.5 1.5 0 0 1-1.5-1.5V4.600a1.5 1.5 0 0 1 1.5-1.500h13.100a1.5 1.5 0 0 1 1.5 1.500V12M10.900 5.800v10M5.900 10.800h10M13.800 17.800h7.200M17.700 14.300l3.800 3.500-3.800 3.600" fill="none" stroke="#d8d8d8" stroke-width="2"/></svg>
<div style="position:absolute;left:503px;top:1004px;width:120px;height:18px;line-height:18px;font-size:13px;color:#e8e8e8;text-align:center;letter-spacing:-0.5px;font-weight:normal;white-space:nowrap;">Add Sample model</div>
<svg style="position:absolute;left:663px;top:980px;" width="26" height="24" viewBox="0 0 26 24"><path d="M14 14.900H3.900V6.900h16.200v2.400M19.900 11.200v8M16 15.100h8" fill="none" stroke="#d8d8d8" stroke-width="2.1"/></svg>
<div style="position:absolute;left:615px;top:1004px;width:120px;height:18px;line-height:18px;font-size:13px;color:#e8e8e8;text-align:center;letter-spacing:-0.35px;font-weight:normal;white-space:nowrap;">Add Variable or Id</div>
<div style="position:absolute;left:736.6px;top:979px;width:1.4px;height:41px;background:#8c8c8c;"></div>
<svg style="position:absolute;left:778.2px;top:978.8px;" width="24" height="24" viewBox="0 0 24 24"><path d="M17.66 9.53l-7.070 7.070-4.240-4.240 1.410-1.410 2.830 2.830 5.660-5.660 1.410 1.410zM4 12c0-2.330 1.020-4.420 2.620-5.880L9 8.500v-6H3l2.200 2.200C3.240 6.520 2 9.110 2 12c0 5.190 3.950 9.450 9 9.950v-2.020c-3.940-.49-7-3.860-7-7.930zm18 0c0-5.190-3.950-9.450-9-9.950v2.020c3.940.49 7 3.860 7 7.930 0 2.330-1.020 4.420-2.620 5.880L15 15.500v6h6l-2.200-2.200c1.960-1.820 3.200-4.410 3.200-7.300z" fill="#d8d8d8"/></svg>
<div style="position:absolute;left:730px;top:1004px;width:120px;height:18px;line-height:18px;font-size:13px;color:#e8e8e8;text-align:center;letter-spacing:-0.5px;font-weight:normal;white-space:nowrap;">Apply Changes</div>
<div style="position:absolute;left:842.6px;top:979px;width:1.4px;height:41px;background:#8c8c8c;"></div>
<svg style="position:absolute;left:885px;top:979px;" width="24" height="24" viewBox="0 0 24 24"><circle cx="12" cy="12" r="12" fill="#20d69e"/><text x="12" y="16.5" font-size="15" font-weight="bold" fill="#fff" text-anchor="middle" font-family="Liberation Sans, sans-serif">e.</text></svg>
<div style="position:absolute;left:837px;top:1004px;width:120px;height:18px;line-height:18px;font-size:13px;color:#e8e8e8;text-align:center;letter-spacing:-0.5px;font-weight:normal;white-space:nowrap;">Open in Evince</div>
<div style="position:absolute;left:1808px;top:974px;width:100px;height:50px;background:#a67fa8;border-radius:9px;"></div>
<svg style="position:absolute;left:1846px;top:981px;" width="24" height="18" viewBox="0 0 24 18"><rect x="1.5" y="2.2" width="14.4" height="12.6" rx="1.8" fill="none" stroke="#fff" stroke-width="2"/><path d="M16.6 7.2l4.8-3.6v10.2l-4.8-3.6z" fill="#fff"/></svg>
<div style="position:absolute;left:1808px;top:1002px;width:100px;height:20px;line-height:20px;font-size:13px;color:#fff;text-align:center;letter-spacing:-0.55px;font-weight:normal;white-space:nowrap;">Recorder</div>
</body></html>
